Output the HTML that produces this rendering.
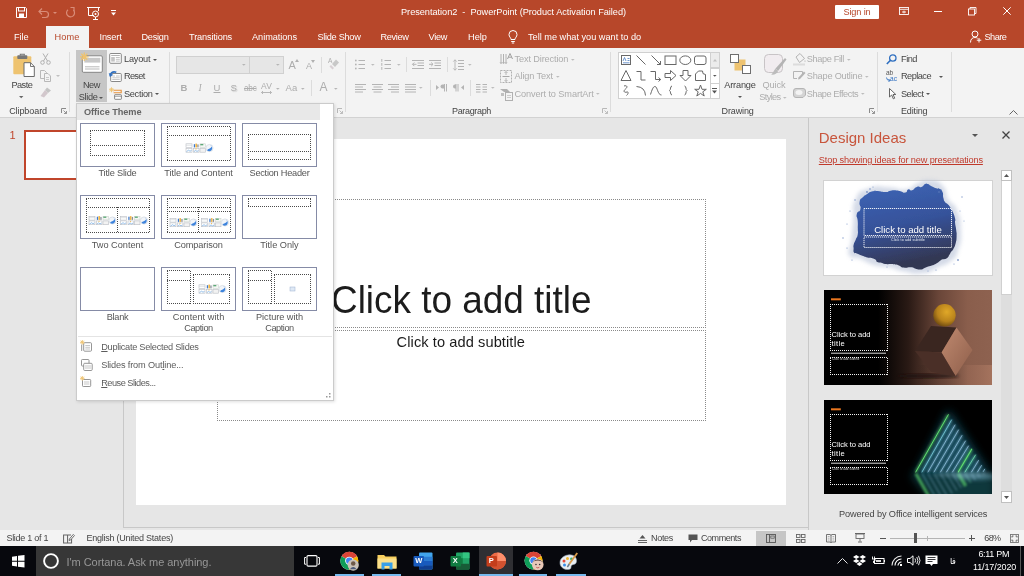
<!DOCTYPE html>
<html><head><meta charset="utf-8"><title>Presentation2 - PowerPoint</title>
<style>
*{box-sizing:border-box;margin:0;padding:0}
html,body{width:1024px;height:576px;overflow:hidden;background:#e6e6e6}
body{font-family:"Liberation Sans","Noto Sans CJK SC",sans-serif;font-size:9px;color:#444;position:relative}
.a{position:absolute}
.t{position:absolute;white-space:pre}
svg{position:absolute;overflow:visible}
.sep{position:absolute;width:1px;background:#dadada}
</style></head><body>
<div id="root" style="position:absolute;left:0;top:0;width:1024px;height:576px;will-change:transform;transform:translateZ(0)">
<div class="a" style="left:0px;top:0px;width:1024px;height:48px;background:#b7472a"></div>
<svg style="left:16px;top:7px;" width="11" height="11" viewBox="0 0 11 11"><path d="M0.5 0.5H9.5L10.5 1.5V10.5H0.5Z" fill="none" stroke="#fff" stroke-width="1"/><rect x="2.5" y="0.5" width="6" height="3.5" fill="none" stroke="#fff"/><rect x="3" y="6.5" width="5" height="4" fill="#fff"/></svg>
<svg style="left:38px;top:7px;" width="12" height="11" viewBox="0 0 12 11"><path d="M1 4.5H7.5A3 3 0 0 1 7.5 10.5H4" fill="none" stroke="#d98c78" stroke-width="1.2"/><path d="M4 1.5L1 4.5L4 7.5" fill="none" stroke="#d98c78" stroke-width="1.2"/></svg>
<svg style="left:53px;top:12.0px;" width="4" height="2" viewBox="0 0 4 2"><path d="M0 0H4 L2 2 Z" fill="#d98c78"/></svg>
<svg style="left:65px;top:7px;" width="11" height="12" viewBox="0 0 11 12"><path d="M8.5 3.2A4 4 0 1 1 3 2.8" fill="none" stroke="#d98c78" stroke-width="1.2"/><path d="M5.5 0.5H9V4" fill="none" stroke="#d98c78" stroke-width="1.2"/></svg>
<svg style="left:86.5px;top:6px;" width="13" height="14" viewBox="0 0 13 14"><path d="M0 1.5H13M1.5 1.5V9.5H7M11.5 1.5V5" fill="none" stroke="#fff" stroke-width="1"/><circle cx="8.5" cy="8" r="3" fill="none" stroke="#fff"/><circle cx="8.5" cy="8" r="1" fill="#fff"/><path d="M6 13.5H11M8.5 11V13.5" stroke="#fff" fill="none"/></svg>
<svg style="left:111px;top:10px;" width="5" height="6" viewBox="0 0 5 6"><path d="M0 0.5H5" stroke="#fff"/><path d="M0 2.5H5L2.5 5.5Z" fill="#fff"/></svg>
<span class="t" style="left:401px;top:5.7px;font-size:9.2px;line-height:12px;height:12px;color:#fff;font-weight:normal;font-style:normal;letter-spacing:-0.03px;">Presentation2  -  PowerPoint (Product Activation Failed)</span>
<div class="a" style="left:835px;top:4.5px;width:44px;height:14.5px;background:#fff;border-radius:1px"></div>
<span class="t" style="left:843.5px;top:5.7px;font-size:9.2px;line-height:12px;height:12px;color:#b7472a;font-weight:normal;font-style:normal;letter-spacing:-0.16px;">Sign in</span>
<svg style="left:898.5px;top:7px;" width="10" height="8" viewBox="0 0 10 8"><rect x="0.5" y="0.5" width="9" height="7" fill="none" stroke="#fff" stroke-width="0.9"/><path d="M0.5 2.300H9.500" stroke="#fff" stroke-width="0.900"/><path d="M3 5H7M5 3.600V6.400" stroke="#fff" stroke-width="0.900"/></svg>
<div class="a" style="left:934px;top:10.6px;width:8px;height:1px;background:#fff"></div>
<svg style="left:968px;top:7px;" width="8.5" height="8.5" viewBox="0 0 8.5 8.5"><rect x="0.5" y="2" width="6" height="6" fill="none" stroke="#fff" stroke-width="0.9"/><path d="M2 2V0.500H8V6.500H6.500" fill="none" stroke="#fff" stroke-width="0.900"/></svg>
<svg style="left:1003px;top:7px;" width="8" height="8" viewBox="0 0 8 8"><path d="M0.300 0.300L7.700 7.700M7.700 0.300L0.300 7.700" stroke="#fff" stroke-width="1"/></svg>
<div class="a" style="left:46px;top:26px;width:43px;height:22px;background:#f3f3f3"></div>
<span class="t" style="left:14px;top:30.7px;font-size:9.2px;line-height:12px;height:12px;color:#fff;font-weight:normal;font-style:normal;letter-spacing:-0.08px;">File</span>
<span class="t" style="left:54.5px;top:30.7px;font-size:9.2px;line-height:12px;height:12px;color:#b7472a;font-weight:normal;font-style:normal;letter-spacing:0.12px;">Home</span>
<span class="t" style="left:99.5px;top:30.7px;font-size:9.2px;line-height:12px;height:12px;color:#fff;font-weight:normal;font-style:normal;letter-spacing:-0.16px;">Insert</span>
<span class="t" style="left:141.5px;top:30.7px;font-size:9.2px;line-height:12px;height:12px;color:#fff;font-weight:normal;font-style:normal;letter-spacing:-0.27px;">Design</span>
<span class="t" style="left:189px;top:30.7px;font-size:9.2px;line-height:12px;height:12px;color:#fff;font-weight:normal;font-style:normal;letter-spacing:-0.14px;">Transitions</span>
<span class="t" style="left:252px;top:30.7px;font-size:9.2px;line-height:12px;height:12px;color:#fff;font-weight:normal;font-style:normal;letter-spacing:-0.05px;">Animations</span>
<span class="t" style="left:317.5px;top:30.7px;font-size:9.2px;line-height:12px;height:12px;color:#fff;font-weight:normal;font-style:normal;letter-spacing:-0.30px;">Slide Show</span>
<span class="t" style="left:380.5px;top:30.7px;font-size:9.2px;line-height:12px;height:12px;color:#fff;font-weight:normal;font-style:normal;letter-spacing:-0.35px;">Review</span>
<span class="t" style="left:428.5px;top:30.7px;font-size:9.2px;line-height:12px;height:12px;color:#fff;font-weight:normal;font-style:normal;letter-spacing:-0.31px;">View</span>
<span class="t" style="left:468px;top:30.7px;font-size:9.2px;line-height:12px;height:12px;color:#fff;font-weight:normal;font-style:normal;letter-spacing:0.02px;">Help</span>
<svg style="left:508px;top:30px;" width="10" height="14" viewBox="0 0 10 14"><path d="M3 9.5C3 7.5 1 7 1 4.5A4 4 0 0 1 9 4.5C9 7 7 7.5 7 9.5Z" fill="none" stroke="#fff" stroke-width="1"/><path d="M3.2 11.5H6.8M3.8 13H6.2" stroke="#fff" stroke-width="1"/></svg>
<span class="t" style="left:528px;top:30.7px;font-size:9.2px;line-height:12px;height:12px;color:#fff;font-weight:normal;font-style:normal;letter-spacing:-0.01px;">Tell me what you want to do</span>
<svg style="left:970px;top:30px;" width="12" height="13" viewBox="0 0 12 13"><circle cx="5" cy="4" r="3" fill="none" stroke="#fff"/><path d="M0.5 12.5C0.5 9 2.5 7.5 5 7.5C6 7.5 7 7.8 7.6 8.3" fill="none" stroke="#fff"/><path d="M9 8V12.5M6.8 10.2H11.3" stroke="#fff"/></svg>
<span class="t" style="left:984.5px;top:30.7px;font-size:9.2px;line-height:12px;height:12px;color:#fff;font-weight:normal;font-style:normal;letter-spacing:-0.51px;">Share</span>
<div class="a" style="left:0px;top:48px;width:1024px;height:70px;background:#f3f3f3;border-bottom:1px solid #d2d2d2"></div>
<div class="a" style="left:69.3px;top:52px;width:1px;height:60px;background:#dcdcdc"></div>
<div class="a" style="left:169px;top:52px;width:1px;height:60px;background:#dcdcdc"></div>
<div class="a" style="left:345px;top:52px;width:1px;height:60px;background:#dcdcdc"></div>
<div class="a" style="left:610.2px;top:52px;width:1px;height:60px;background:#dcdcdc"></div>
<div class="a" style="left:877px;top:52px;width:1px;height:60px;background:#dcdcdc"></div>
<div class="a" style="left:951px;top:52px;width:1px;height:60px;background:#dcdcdc"></div>
<svg style="left:12.5px;top:54px;" width="22" height="22" viewBox="0 0 22 22"><rect x="0.3" y="2.300" width="18" height="18" rx="1" fill="#eec370"/><rect x="4.300" y="1.300" width="10" height="3.700" rx="0.800" fill="#767676"/><path d="M7.300 1.500V0.300H11.300V1.500" fill="none" stroke="#767676" stroke-width="1.100"/><path d="M11 8.700H17.500L21.300 12.500V22.500H11Z" fill="#fff" stroke="#6b6b6b" stroke-width="1"/><path d="M17.500 8.700V12.500H21.300" fill="none" stroke="#6b6b6b" stroke-width="0.900"/></svg>
<span class="t" style="left:11.5px;top:79.4px;font-size:9.2px;line-height:12px;height:12px;color:#444;font-weight:normal;font-style:normal;letter-spacing:-0.56px;">Paste</span>
<svg style="left:18.8px;top:95.5px;" width="4.4" height="2.2" viewBox="0 0 4.4 2.2"><path d="M0 0H4.4 L2.2 2.2 Z" fill="#666"/></svg>
<svg style="left:40px;top:53px;" width="11" height="12" viewBox="0 0 11 12"><path d="M3 0.5L7.5 8M8 0.5L3.5 8" stroke="#b0b0b0" fill="none" stroke-width="1"/><circle cx="2.5" cy="9.5" r="1.8" fill="none" stroke="#b0b0b0"/><circle cx="8.5" cy="9.5" r="1.8" fill="none" stroke="#b0b0b0"/></svg>
<svg style="left:40px;top:70px;" width="11" height="12" viewBox="0 0 11 12"><path d="M0.5 0.5H4.5L6.5 2.5V8.5H0.5Z" fill="none" stroke="#b8b8b8"/><path d="M4.5 3.5H8L10.5 6V11.5H4.5Z" fill="#f3f3f3" stroke="#b8b8b8"/><path d="M6 7.5H9M6 9.5H9" stroke="#c8c8c8"/></svg>
<svg style="left:56px;top:75.0px;" width="4" height="2" viewBox="0 0 4 2"><path d="M0 0H4 L2 2 Z" fill="#c0c0c0"/></svg>
<svg style="left:40px;top:87px;" width="12" height="11" viewBox="0 0 12 11"><path d="M7 0.5L11 3.5L8 6L5 3Z" fill="#c4c4c4"/><path d="M5 3L8 6L4 10.5L0.5 9Z" fill="#d2c7cc"/></svg>
<span class="t" style="left:9.2px;top:104.7px;font-size:9px;line-height:12px;height:12px;color:#444;font-weight:normal;font-style:normal;letter-spacing:-0.08px;">Clipboard</span>
<svg style="left:61px;top:107.8px;" width="6" height="6" viewBox="0 0 6 6"><path d="M0.5 5V0.5H5" fill="none" stroke="#8a8a8a"/><path d="M2.5 2.5L5.5 5.5M5.5 3V5.5H3" fill="none" stroke="#8a8a8a" stroke-width="0.9"/></svg>
<div class="a" style="left:76px;top:50px;width:31px;height:52px;background:#c6c6c6"></div>
<svg style="left:78.5px;top:52px;" width="24" height="21" viewBox="0 0 24 21"><rect x="3.300" y="3.800" width="20" height="16.500" rx="1.200" fill="#fff" stroke="#7c7c7c" stroke-width="0.9"/><rect x="5.300" y="5.800" width="16" height="4.800" fill="#c8c8c8"/><path d="M6 14.800H20.500M6 17H20.500" stroke="#9a9a9a" stroke-width="0.700"/><path d="M5.300 0.500V9M1 4.800H9.600M2.300 1.800L8.300 7.800M8.300 1.800L2.300 7.800" stroke="#eec370" stroke-width="1.300"/></svg>
<span class="t" style="left:83px;top:79.4px;font-size:9.2px;line-height:12px;height:12px;color:#444;font-weight:normal;font-style:normal;letter-spacing:-0.53px;">New</span>
<span class="t" style="left:78.8px;top:90.9px;font-size:9.2px;line-height:12px;height:12px;color:#444;font-weight:normal;font-style:normal;letter-spacing:-0.35px;">Slide</span>
<svg style="left:99px;top:96.5px;" width="4" height="2" viewBox="0 0 4 2"><path d="M0 0H4 L2 2 Z" fill="#555"/></svg>
<svg style="left:109px;top:53.3px;" width="13" height="11" viewBox="0 0 13 11"><rect x="0.700" y="0.500" width="11.600" height="9.800" rx="1" fill="#fff" stroke="#7c7c7c" stroke-width="0.9"/><path d="M2.200 2.500H10.800" stroke="#a0a0a0" stroke-width="0.800"/><rect x="2.200" y="4" width="3.600" height="4.600" fill="#c4c4c4"/><path d="M6.800 4.500H10.800M6.800 6.300H10.800M6.800 8.100H10.800" stroke="#a8a8a8" stroke-width="0.700"/></svg>
<span class="t" style="left:124px;top:52.6px;font-size:9.2px;line-height:12px;height:12px;color:#444;font-weight:normal;font-style:normal;letter-spacing:-0.22px;">Layout</span>
<svg style="left:153px;top:58.5px;" width="4" height="2" viewBox="0 0 4 2"><path d="M0 0H4 L2 2 Z" fill="#555"/></svg>
<svg style="left:109px;top:69.5px;" width="13" height="13" viewBox="0 0 13 13"><rect x="1.700" y="3.500" width="10.600" height="8" rx="0.800" fill="#fff" stroke="#7c7c7c" stroke-width="0.9"/><path d="M3.300 6H6M7 6H10.800M3.300 7.800H10.800M3.300 9.500H10.800" stroke="#b0b0b0" stroke-width="0.700"/><path d="M1.200 6.300C0.800 3.300 3.500 0.800 7.300 2.300" fill="none" stroke="#2f6fc0" stroke-width="1.600"/><path d="M-0.300 3L1.200 6.800L4.300 4.800Z" fill="#2f6fc0"/></svg>
<span class="t" style="left:124px;top:70.4px;font-size:9.2px;line-height:12px;height:12px;color:#444;font-weight:normal;font-style:normal;letter-spacing:-0.70px;">Reset</span>
<svg style="left:109px;top:86.5px;" width="14" height="13" viewBox="0 0 14 13"><path d="M4.600 3.200H12.200V5.800H4.600" fill="none" stroke="#e8923c" stroke-width="1.100"/><rect x="5.600" y="7.700" width="6.800" height="4.600" rx="0.500" fill="#fff" stroke="#7c7c7c" stroke-width="0.900"/><path d="M5.600 9.300H12.400" stroke="#7c7c7c" stroke-width="0.700"/><path d="M2.500 0.300V5.300M0 2.800H5M0.800 1.100L4.200 4.500M4.200 1.100L0.800 4.500" stroke="#eec370" stroke-width="0.900"/></svg>
<span class="t" style="left:124px;top:88.0px;font-size:9.2px;line-height:12px;height:12px;color:#444;font-weight:normal;font-style:normal;letter-spacing:-0.31px;">Section</span>
<svg style="left:155px;top:93.0px;" width="4" height="2" viewBox="0 0 4 2"><path d="M0 0H4 L2 2 Z" fill="#555"/></svg>
<div class="a" style="left:176px;top:56px;width:73.5px;height:17.5px;background:#e6e6e6;border:1px solid #d0d0d0"></div>
<div class="a" style="left:249px;top:56px;width:34.5px;height:17.5px;background:#e6e6e6;border:1px solid #d0d0d0"></div>
<svg style="left:242.2px;top:64.1px;" width="3.6" height="1.8" viewBox="0 0 3.6 1.8"><path d="M0 0H3.6 L1.8 1.8 Z" fill="#b5b5b5"/></svg>
<svg style="left:276.2px;top:64.1px;" width="3.6" height="1.8" viewBox="0 0 3.6 1.8"><path d="M0 0H3.6 L1.8 1.8 Z" fill="#b5b5b5"/></svg>
<span class="t" style="left:288.5px;top:58.4px;font-size:11px;line-height:14px;height:14px;color:#adadad;font-weight:normal;font-style:normal;letter-spacing:0.66px;">A</span>
<svg style="left:295px;top:58.5px;" width="4" height="3" viewBox="0 0 4 3"><path d="M0 3L2 0L4 3Z" fill="#b0b0b0"/></svg>
<span class="t" style="left:306px;top:60.4px;font-size:9px;line-height:12px;height:12px;color:#adadad;font-weight:normal;font-style:normal;letter-spacing:-0.02px;">A</span>
<svg style="left:311px;top:59.5px;" width="4" height="3" viewBox="0 0 4 3"><path d="M0 0H4L2 3Z" fill="#b0b0b0"/></svg>
<div class="a" style="left:320.5px;top:57px;width:1px;height:16px;background:#dcdcdc"></div>
<svg style="left:327px;top:58px;" width="12" height="12" viewBox="0 0 12 12"><path d="M5 6L9 1.5L12 4.5L8 9Z" fill="#c8c8c8"/><path d="M4 7L7 10L5.5 11.5L2.5 8.5Z" fill="#d8d0d4"/></svg>
<span class="t" style="left:328px;top:57.1px;font-size:6.5px;line-height:8px;height:8px;color:#adadad;font-weight:normal;font-style:normal;letter-spacing:0.66px;">A</span>
<span class="t" style="left:180.5px;top:82.0px;font-size:9.5px;line-height:12px;height:12px;color:#adadad;font-weight:bold;font-style:normal;letter-spacing:-0.38px;">B</span>
<span class="t" style="left:198.5px;top:82.0px;font-size:9.5px;line-height:12px;height:12px;color:#adadad;font-weight:normal;font-style:italic;letter-spacing:0.36px;font-family:'Liberation Serif',serif;">I</span>
<span class="t" style="left:213.5px;top:82.0px;font-size:9.5px;line-height:12px;height:12px;color:#adadad;font-weight:normal;font-style:normal;letter-spacing:0.12px;text-decoration:underline;">U</span>
<span class="t" style="left:230.5px;top:82.0px;font-size:9.5px;line-height:12px;height:12px;color:#adadad;font-weight:normal;font-style:normal;letter-spacing:-0.34px;text-shadow:1px 1px 1px #ccc;">S</span>
<span class="t" style="left:244px;top:82.6px;font-size:8.2px;line-height:11px;height:11px;color:#adadad;font-weight:normal;font-style:normal;letter-spacing:-0.23px;text-decoration:line-through;">abc</span>
<span class="t" style="left:261px;top:80.6px;font-size:8.5px;line-height:11px;height:11px;color:#adadad;font-weight:normal;font-style:normal;letter-spacing:0.14px;">AV</span>
<svg style="left:261px;top:91.3px;" width="11" height="3" viewBox="0 0 11 3"><path d="M0.5 1.5H10.5M2 0L0.5 1.5L2 3M9 0L10.5 1.5L9 3" fill="none" stroke="#b0b0b0" stroke-width="0.9"/></svg>
<svg style="left:275.7px;top:87.69999999999999px;" width="3.6" height="1.8" viewBox="0 0 3.6 1.8"><path d="M0 0H3.6 L1.8 1.8 Z" fill="#b5b5b5"/></svg>
<span class="t" style="left:285.5px;top:82.0px;font-size:9.5px;line-height:12px;height:12px;color:#adadad;font-weight:normal;font-style:normal;letter-spacing:0.19px;">Aa</span>
<svg style="left:300.7px;top:87.69999999999999px;" width="3.6" height="1.8" viewBox="0 0 3.6 1.8"><path d="M0 0H3.6 L1.8 1.8 Z" fill="#b5b5b5"/></svg>
<div class="a" style="left:311px;top:80px;width:1px;height:16px;background:#dcdcdc"></div>
<span class="t" style="left:319.5px;top:79.4px;font-size:12px;line-height:16px;height:16px;color:#adadad;font-weight:normal;font-style:normal;letter-spacing:-0.02px;">A</span>
<svg style="left:333.7px;top:87.69999999999999px;" width="3.6" height="1.8" viewBox="0 0 3.6 1.8"><path d="M0 0H3.6 L1.8 1.8 Z" fill="#b5b5b5"/></svg>
<svg style="left:337px;top:107.8px;" width="6" height="6" viewBox="0 0 6 6"><path d="M0.5 5V0.5H5" fill="none" stroke="#b8b8b8"/><path d="M2.5 2.5L5.5 5.5M5.5 3V5.5H3" fill="none" stroke="#b8b8b8" stroke-width="0.9"/></svg>
<svg style="left:355px;top:59px;" width="10" height="11" viewBox="0 0 10 11"><path d="M3.5 1.5H10M3.5 5.500H10M3.5 9.500H10" stroke="#b4b4b4"/><rect x="0" y="0.7" width="1.6" height="1.6" fill="#b4b4b4"/><rect x="0" y="4.700" width="1.6" height="1.6" fill="#b4b4b4"/><rect x="0" y="8.700" width="1.6" height="1.6" fill="#b4b4b4"/></svg>
<svg style="left:371.2px;top:63.9px;" width="3.6" height="1.8" viewBox="0 0 3.6 1.8"><path d="M0 0H3.6 L1.8 1.8 Z" fill="#bcbcbc"/></svg>
<svg style="left:381px;top:59px;" width="10" height="11" viewBox="0 0 10 11"><path d="M3.5 1.5H10M3.5 5.500H10M3.5 9.500H10" stroke="#b4b4b4"/><path d="M0.8 0V2.800M0.8 4V6.800M0.8 8V10.800" stroke="#b4b4b4" stroke-width="1"/></svg>
<svg style="left:396.7px;top:63.9px;" width="3.6" height="1.8" viewBox="0 0 3.6 1.8"><path d="M0 0H3.6 L1.8 1.8 Z" fill="#bcbcbc"/></svg>
<div class="a" style="left:406px;top:57px;width:1px;height:15px;background:#dcdcdc"></div>
<svg style="left:412px;top:60px;" width="12" height="9" viewBox="0 0 12 9"><path d="M0 0.5H12M5.5 3H12M5.5 5.5H12M0 8.5H12" stroke="#b4b4b4"/><path d="M4.5 4.3H0.5M2.3 2.5L0.5 4.3L2.3 6.1" stroke="#b4b4b4" fill="none"/></svg>
<svg style="left:429px;top:60px;" width="12" height="9" viewBox="0 0 12 9"><path d="M0 0.5H12M5.5 3H12M5.5 5.5H12M0 8.5H12" stroke="#b4b4b4"/><path d="M0 4.3H4M2.2 2.5L4 4.3L2.2 6.1" stroke="#b4b4b4" fill="none"/></svg>
<div class="a" style="left:446.5px;top:57px;width:1px;height:15px;background:#dcdcdc"></div>
<svg style="left:452.5px;top:58.5px;" width="11" height="12" viewBox="0 0 11 12"><path d="M5 1.5H11M5 4.5H11M5 7.5H11M5 10.5H11" stroke="#b4b4b4"/><path d="M2 0.8V11.2M0.3 2.6L2 0.8L3.7 2.6M0.3 9.4L2 11.2L3.7 9.4" stroke="#b4b4b4" fill="none" stroke-width="0.9"/></svg>
<svg style="left:467.7px;top:63.9px;" width="3.6" height="1.8" viewBox="0 0 3.6 1.8"><path d="M0 0H3.6 L1.8 1.8 Z" fill="#bcbcbc"/></svg>
<svg style="left:355px;top:83.5px;" width="11" height="9" viewBox="0 0 11 9"><path d="M0 0.5H11M0 3H8M0 5.5H11M0 8H8" stroke="#b4b4b4"/></svg>
<svg style="left:372px;top:83.5px;" width="11" height="9" viewBox="0 0 11 9"><path d="M0 0.5H11M1.5 3H9.5M0 5.5H11M1.5 8H9.5" stroke="#b4b4b4"/></svg>
<svg style="left:388px;top:83.5px;" width="11" height="9" viewBox="0 0 11 9"><path d="M0 0.5H11M3 3H11M0 5.5H11M3 8H11" stroke="#b4b4b4"/></svg>
<svg style="left:404.5px;top:83.5px;" width="11" height="9" viewBox="0 0 11 9"><path d="M0 0.5H11M0 3H11M0 5.5H11M0 8H11" stroke="#b4b4b4"/></svg>
<svg style="left:419.2px;top:87.1px;" width="3.6" height="1.8" viewBox="0 0 3.6 1.8"><path d="M0 0H3.6 L1.8 1.8 Z" fill="#bcbcbc"/></svg>
<div class="a" style="left:429.5px;top:80px;width:1px;height:16px;background:#dcdcdc"></div>
<svg style="left:436px;top:84px;" width="11" height="8" viewBox="0 0 11 8"><path d="M0 1L3 3.5L0 6Z" fill="#b4b4b4"/><path d="M8.5 0V7.5M10.5 0V7.5" stroke="#b4b4b4"/><path d="M8.5 0.5H6.5A2 2 0 0 0 6.5 4.5H8.5Z" fill="#b4b4b4"/></svg>
<svg style="left:452.5px;top:84px;" width="11" height="8" viewBox="0 0 11 8"><path d="M11 1L8 3.5L11 6Z" fill="#b4b4b4"/><path d="M3 0V7.5M5 0V7.5" stroke="#b4b4b4"/><path d="M3 0.5H2A2 2 0 0 0 2 4.5H3Z" fill="#b4b4b4"/></svg>
<div class="a" style="left:470px;top:80px;width:1px;height:16px;background:#dcdcdc"></div>
<svg style="left:476px;top:83.5px;" width="11" height="9" viewBox="0 0 11 9"><path d="M0 0.5H4.5M6.5 0.5H11M0 3H4.5M6.5 3H11M0 5.5H4.5M6.5 5.5H11M0 8H4.5M6.5 8H11" stroke="#b4b4b4"/></svg>
<svg style="left:490.7px;top:87.1px;" width="3.6" height="1.8" viewBox="0 0 3.6 1.8"><path d="M0 0H3.6 L1.8 1.8 Z" fill="#bcbcbc"/></svg>
<svg style="left:499.5px;top:53px;" width="13" height="12" viewBox="0 0 13 12"><path d="M1 1V10M3.5 1V10M6 1V10" stroke="#b0b0b0"/><path d="M0 9L1 11L2 9M2.5 9L3.5 11L4.5 9M5 9L6 11L7 9" stroke="#b0b0b0" fill="none" stroke-width="0.7"/><path d="M7.5 6L10 0.5L12.5 6M8.3 4.2H11.7" stroke="#a0a0a0" fill="none"/></svg>
<span class="t" style="left:514.5px;top:52.6px;font-size:9.2px;line-height:12px;height:12px;color:#adadad;font-weight:normal;font-style:normal;letter-spacing:-0.13px;">Text Direction</span>
<svg style="left:570.7px;top:58.6px;" width="3.6" height="1.8" viewBox="0 0 3.6 1.8"><path d="M0 0H3.6 L1.8 1.8 Z" fill="#bcbcbc"/></svg>
<svg style="left:500px;top:70px;" width="12" height="13" viewBox="0 0 12 13"><rect x="0.5" y="0.5" width="11" height="12" fill="none" stroke="#b0b0b0" stroke-dasharray="2 1"/><path d="M2.5 6.5H9.5" stroke="#a8a8a8"/><path d="M6 1.5V5M6 8V11.5M4.5 3L6 1.5L7.5 3M4.5 10L6 11.5L7.5 10" stroke="#a8a8a8" fill="none" stroke-width="0.8"/></svg>
<span class="t" style="left:514.5px;top:70.4px;font-size:9.2px;line-height:12px;height:12px;color:#adadad;font-weight:normal;font-style:normal;letter-spacing:-0.12px;">Align Text</span>
<svg style="left:555.7px;top:75.69999999999999px;" width="3.6" height="1.8" viewBox="0 0 3.6 1.8"><path d="M0 0H3.6 L1.8 1.8 Z" fill="#bcbcbc"/></svg>
<svg style="left:500px;top:87.5px;" width="13" height="13" viewBox="0 0 13 13"><path d="M0 1H7L10 4H4Z" fill="#b0b0b0"/><rect x="5.5" y="4.5" width="7" height="8" fill="#f3f3f3" stroke="#b0b0b0"/><path d="M7 7.5H11M7 9.5H11" stroke="#c0c0c0" stroke-width="0.8"/><rect x="1" y="5" width="3" height="3" fill="#c0c0c0"/></svg>
<span class="t" style="left:514.5px;top:88.2px;font-size:9.2px;line-height:12px;height:12px;color:#adadad;font-weight:normal;font-style:normal;letter-spacing:-0.10px;">Convert to SmartArt</span>
<svg style="left:596.2px;top:93.3px;" width="3.6" height="1.8" viewBox="0 0 3.6 1.8"><path d="M0 0H3.6 L1.8 1.8 Z" fill="#bcbcbc"/></svg>
<span class="t" style="left:452px;top:104.7px;font-size:9px;line-height:12px;height:12px;color:#444;font-weight:normal;font-style:normal;letter-spacing:-0.34px;">Paragraph</span>
<svg style="left:602px;top:107.8px;" width="6" height="6" viewBox="0 0 6 6"><path d="M0.5 5V0.5H5" fill="none" stroke="#b8b8b8"/><path d="M2.5 2.5L5.5 5.5M5.5 3V5.5H3" fill="none" stroke="#b8b8b8" stroke-width="0.9"/></svg>
<div class="a" style="left:618px;top:52px;width:102px;height:46.5px;background:#fff;border:1px solid #d0d0d0"></div>
<div class="a" style="left:709.5px;top:52px;width:10.5px;height:16px;background:#ececec;border:1px solid #d0d0d0"></div>
<div class="a" style="left:709.5px;top:67.5px;width:10.5px;height:16px;background:#fff;border:1px solid #d0d0d0"></div>
<div class="a" style="left:709.5px;top:83px;width:10.5px;height:15.5px;background:#fff;border:1px solid #d0d0d0"></div>
<svg style="left:712.5px;top:58.5px;" width="4" height="2.5" viewBox="0 0 4 2.5"><path d="M0 2.5L2 0L4 2.5Z" fill="#c0c0c0"/></svg>
<svg style="left:712.9000000000001px;top:74.6px;" width="3.6" height="1.8" viewBox="0 0 3.6 1.8"><path d="M0 0H3.6 L1.8 1.8 Z" fill="#555"/></svg>
<svg style="left:712.2px;top:88px;" width="5" height="6" viewBox="0 0 5 6"><path d="M0 0.5H5" stroke="#555"/><path d="M0 2.5H5L2.5 5.5Z" fill="#555"/></svg>
<svg style="left:0;top:0" width="1024" height="120" viewBox="0 0 1024 120"><rect x="621.5" y="55.5" width="9" height="9" fill="#fff" stroke="#686868"/><path d="M623 61L624.5 57.5L626 61M627.5 58.5H629.5M627.5 60.5H629.5M623 62.8H629.5" stroke="#4a7cc0" stroke-width="0.8" fill="none"/><path d="M636.5 55.5L645.5 64.5" stroke="#686868"/><path d="M651.5 55.5L660.5 64.5M660.5 61V64.5H657" stroke="#686868" fill="none"/><rect x="665" y="56" width="11" height="8.5" fill="none" stroke="#686868"/><ellipse cx="685.3" cy="60.2" rx="5.5" ry="4.3" fill="none" stroke="#686868"/><rect x="694.5" y="56" width="11.5" height="8.5" rx="2" fill="none" stroke="#686868"/><path d="M626 70.5L631 80.5H621Z" fill="none" stroke="#686868"/><path d="M636.5 71.5H641V80H645.5" fill="none" stroke="#686868"/><path d="M650.5 71.5H655.5V79.5H660.5M658.5 77.5L660.7 79.5L658.5 81.5" fill="none" stroke="#686868"/><path d="M665 73.5H670.5V70.5L676 75.5L670.5 80.5V77.5H665Z" fill="none" stroke="#686868"/><path d="M683 70.5H688V75.5H691L685.5 81L680 75.5H683Z" fill="none" stroke="#686868"/><path d="M695.5 80.5V74L698.500 71H702.500Q702 74.500 705.500 74.500V80.500Z" fill="none" stroke="#686868"/><path d="M624 86C627 85 628 87 625.5 89C623 91 624 93 627 92C629 91.5 628 94.5 626.5 95.5" fill="none" stroke="#686868"/><path d="M636.5 86.5Q645 87 645.5 95.5" fill="none" stroke="#686868"/><path d="M650.500 94.500C652 90 653 86.500 655 86.500C657.500 86.500 657.500 95 661.500 95" fill="none" stroke="#686868"/><path d="M672 86C670 86 671 90 669.5 90.5C671 91 670 95 672 95" fill="none" stroke="#686868"/><path d="M684.5 86C686.5 86 685.5 90 687 90.5C685.5 91 686.5 95 684.5 95" fill="none" stroke="#686868"/><path d="M700.5 85L702 89.3H706.3L702.8 91.8L704.2 96L700.5 93.4L696.8 96L698.2 91.8L694.7 89.3H699Z" fill="none" stroke="#686868"/></svg>
<svg style="left:729.5px;top:54px;" width="21" height="20" viewBox="0 0 21 20"><rect x="4.5" y="5.5" width="11" height="11" fill="#eec370"/><rect x="0.5" y="0.5" width="8" height="8" fill="#fff" stroke="#6e6e6e"/><rect x="12.5" y="11.5" width="8" height="8" fill="#fff" stroke="#6e6e6e"/></svg>
<span class="t" style="left:724.2px;top:79.4px;font-size:9.2px;line-height:12px;height:12px;color:#444;font-weight:normal;font-style:normal;letter-spacing:-0.16px;">Arrange</span>
<svg style="left:738px;top:95.8px;" width="4" height="2" viewBox="0 0 4 2"><path d="M0 0H4 L2 2 Z" fill="#555"/></svg>
<svg style="left:764px;top:54px;" width="22" height="22" viewBox="0 0 22 22"><rect x="0.5" y="0.5" width="18" height="18" rx="4" fill="#f1ecef" stroke="#c8c4c6"/><path d="M21 4L22.500 5.500L14 17L11.500 14.500Z" fill="#b4b4b4"/><path d="M11.500 14.500L14 17C13 20.500 9.500 21 7 20.500C9 19.500 9.500 17 11.500 14.500Z" fill="#bcbcbc"/></svg>
<span class="t" style="left:762.5px;top:79.4px;font-size:9.2px;line-height:12px;height:12px;color:#adadad;font-weight:normal;font-style:normal;letter-spacing:-0.10px;">Quick</span>
<span class="t" style="left:759.3px;top:90.9px;font-size:9.2px;line-height:12px;height:12px;color:#adadad;font-weight:normal;font-style:normal;letter-spacing:-0.64px;">Styles</span>
<svg style="left:783.2px;top:96.6px;" width="3.6" height="1.8" viewBox="0 0 3.6 1.8"><path d="M0 0H3.6 L1.8 1.8 Z" fill="#bcbcbc"/></svg>
<svg style="left:793px;top:53px;" width="13" height="12" viewBox="0 0 13 12"><path d="M3 4L7 0.5L11.5 5.5L6.5 9.5Z" fill="none" stroke="#b4b4b4"/><path d="M12 7C12 7 13 8.5 12 9.3C11 8.5 12 7 12 7Z" fill="#b4b4b4"/><rect x="0" y="10.5" width="12" height="2" fill="#dcdcdc"/></svg>
<span class="t" style="left:806.8px;top:52.6px;font-size:9.2px;line-height:12px;height:12px;color:#adadad;font-weight:normal;font-style:normal;letter-spacing:-0.37px;">Shape Fill</span>
<svg style="left:846.7px;top:58.6px;" width="3.6" height="1.8" viewBox="0 0 3.6 1.8"><path d="M0 0H3.6 L1.8 1.8 Z" fill="#bcbcbc"/></svg>
<svg style="left:793px;top:70px;" width="13" height="12" viewBox="0 0 13 12"><path d="M0.5 1.5H9.5V4M0.5 1.5V8.5H4" fill="none" stroke="#b4b4b4"/><path d="M11 1.5L12.5 3L7 9L5 9.5L5.5 7.5Z" fill="#b4b4b4"/></svg>
<span class="t" style="left:806.8px;top:70.4px;font-size:9.2px;line-height:12px;height:12px;color:#adadad;font-weight:normal;font-style:normal;letter-spacing:-0.21px;">Shape Outline</span>
<svg style="left:864.7px;top:75.69999999999999px;" width="3.6" height="1.8" viewBox="0 0 3.6 1.8"><path d="M0 0H3.6 L1.8 1.8 Z" fill="#bcbcbc"/></svg>
<svg style="left:793px;top:88px;" width="13" height="11" viewBox="0 0 13 11"><path d="M3 0.5H10Q12.5 0.5 12.5 3V7L10 9.5H3Q0.5 9.5 0.5 7V3Q0.5 0.5 3 0.5Z" fill="#d4d4d4" stroke="#b4b4b4"/><ellipse cx="6" cy="4.5" rx="3.5" ry="2.5" fill="#f3f3f3"/></svg>
<span class="t" style="left:806.8px;top:88.2px;font-size:9.2px;line-height:12px;height:12px;color:#adadad;font-weight:normal;font-style:normal;letter-spacing:-0.43px;">Shape Effects</span>
<svg style="left:860.7px;top:93.3px;" width="3.6" height="1.8" viewBox="0 0 3.6 1.8"><path d="M0 0H3.6 L1.8 1.8 Z" fill="#bcbcbc"/></svg>
<span class="t" style="left:721.5px;top:104.7px;font-size:9px;line-height:12px;height:12px;color:#444;font-weight:normal;font-style:normal;letter-spacing:-0.12px;">Drawing</span>
<svg style="left:869px;top:107.8px;" width="6" height="6" viewBox="0 0 6 6"><path d="M0.5 5V0.5H5" fill="none" stroke="#8a8a8a"/><path d="M2.5 2.5L5.5 5.5M5.5 3V5.5H3" fill="none" stroke="#8a8a8a" stroke-width="0.9"/></svg>
<svg style="left:886px;top:54px;" width="11" height="11" viewBox="0 0 11 11"><circle cx="6.8" cy="4" r="3.2" fill="none" stroke="#2f6fc0" stroke-width="1.3"/><path d="M4.5 6.3L0.8 10" stroke="#2f6fc0" stroke-width="1.6"/></svg>
<span class="t" style="left:901px;top:52.6px;font-size:9.2px;line-height:12px;height:12px;color:#444;font-weight:normal;font-style:normal;letter-spacing:-0.47px;">Find</span>
<span class="t" style="left:886px;top:69.1px;font-size:6.5px;line-height:8px;height:8px;color:#555;font-weight:normal;font-style:normal;letter-spacing:-0.12px;">ab</span>
<span class="t" style="left:890px;top:75.1px;font-size:6.5px;line-height:8px;height:8px;color:#2f6fc0;font-weight:normal;font-style:normal;letter-spacing:0.06px;">ac</span>
<svg style="left:886px;top:76.5px;" width="5" height="5" viewBox="0 0 5 5"><path d="M0.5 0.5Q0.5 3.5 4 3.5M2.5 2L4 3.5L2.5 5" stroke="#2f6fc0" fill="none" stroke-width="0.9"/></svg>
<span class="t" style="left:901px;top:70.4px;font-size:9.2px;line-height:12px;height:12px;color:#444;font-weight:normal;font-style:normal;letter-spacing:-0.53px;">Replace</span>
<svg style="left:938.5px;top:75.8px;" width="4" height="2" viewBox="0 0 4 2"><path d="M0 0H4 L2 2 Z" fill="#555"/></svg>
<svg style="left:889px;top:87.5px;" width="7" height="12" viewBox="0 0 7 12"><path d="M0.5 0.5V9L2.7 7L4.3 10.8L5.7 10.2L4.1 6.5H6.8Z" fill="#fff" stroke="#555" stroke-width="0.9"/></svg>
<span class="t" style="left:901px;top:88.0px;font-size:9.2px;line-height:12px;height:12px;color:#444;font-weight:normal;font-style:normal;letter-spacing:-0.52px;">Select</span>
<svg style="left:926px;top:93.2px;" width="4" height="2" viewBox="0 0 4 2"><path d="M0 0H4 L2 2 Z" fill="#555"/></svg>
<span class="t" style="left:901px;top:104.7px;font-size:9px;line-height:12px;height:12px;color:#444;font-weight:normal;font-style:normal;letter-spacing:-0.15px;">Editing</span>
<svg style="left:1009px;top:110px;" width="9" height="5" viewBox="0 0 9 5"><path d="M0.5 4.5L4.5 0.5L8.5 4.5" fill="none" stroke="#666"/></svg>
<div class="a" style="left:123px;top:118px;width:1px;height:410px;background:#c8c8c8"></div>
<div class="a" style="left:123px;top:527px;width:686px;height:1px;background:#c8c8c8"></div>
<span class="t" style="left:9.5px;top:127.8px;font-size:11px;line-height:14px;height:14px;color:#c0452b;font-weight:normal;font-style:normal;letter-spacing:-1.12px;">1</span>
<div class="a" style="left:24px;top:130px;width:54px;height:50px;background:#fff;border:2px solid #c0452b"></div>
<div class="a" style="left:136px;top:138.5px;width:650px;height:366.7px;background:#fff"></div>
<div class="a" style="left:217px;top:198.5px;width:488.5px;height:129px;border:1px dotted #8a8a8a"></div>
<div class="a" style="left:217px;top:330px;width:488.5px;height:90.5px;border:1px dotted #8a8a8a"></div>
<span class="t" style="left:330.5px;top:274.9px;font-size:38.2px;line-height:50px;height:50px;color:#1c1c1c;font-weight:normal;font-style:normal;transform-origin:0 50%;transform:scaleX(0.9664);">Click to add title</span>
<span class="t" style="left:396.6px;top:332.9px;font-size:14.6px;line-height:19px;height:19px;color:#1a1a1a;font-weight:normal;font-style:normal;letter-spacing:0.09px;">Click to add subtitle</span>
<div class="a" style="left:808px;top:118px;width:1px;height:412px;background:#c8c8c8"></div>
<span class="t" style="left:818.8px;top:128.1px;font-size:15px;line-height:20px;height:20px;color:#c8553c;font-weight:normal;font-style:normal;letter-spacing:-0.01px;">Design Ideas</span>
<svg style="left:972px;top:133.5px;" width="6" height="3" viewBox="0 0 6 3"><path d="M0 0H6 L3 3 Z" fill="#555"/></svg>
<svg style="left:1002px;top:131px;" width="8" height="8" viewBox="0 0 8 8"><path d="M0.5 0.5L7.500 7.500M7.500 0.5L0.5 7.500" stroke="#444" stroke-width="1.3"/></svg>
<span class="t" style="left:818.8px;top:153.6px;font-size:9.2px;line-height:12px;height:12px;color:#c0392b;font-weight:normal;font-style:normal;letter-spacing:-0.15px;text-decoration:underline;">Stop showing ideas for new presentations</span>
<div class="a" style="left:1001px;top:170.5px;width:10.8px;height:331.5px;background:#dedede"></div>
<div class="a" style="left:1001px;top:170.3px;width:10.8px;height:10.8px;background:#fff;border:1px solid #c0c0c0"></div>
<svg style="left:1003.9px;top:174px;" width="5" height="3" viewBox="0 0 5 3"><path d="M0 3L2.5 0L5 3Z" fill="#555"/></svg>
<div class="a" style="left:1001px;top:181px;width:10.8px;height:114.3px;background:#fff;border:1px solid #d0d0d0;border-top:none"></div>
<div class="a" style="left:1001px;top:491px;width:10.8px;height:11.5px;background:#fff;border:1px solid #c0c0c0"></div>
<svg style="left:1003.9px;top:495.5px;" width="5" height="3" viewBox="0 0 5 3"><path d="M0 0H5L2.5 3Z" fill="#555"/></svg>
<svg style="left:823px;top:180px;" width="170" height="96" viewBox="0 0 170 96"><defs><linearGradient id="bl" x1="0" y1="0" x2="0.25" y2="1"><stop offset="0" stop-color="#3d66b8"/><stop offset="0.55" stop-color="#36529a"/><stop offset="1" stop-color="#333753"/></linearGradient><filter id="bf" x="-10%" y="-10%" width="120%" height="120%"><feGaussianBlur stdDeviation="0.55"/></filter><filter id="bf2" x="-20%" y="-20%" width="140%" height="140%"><feGaussianBlur stdDeviation="2"/></filter></defs><rect x="0.5" y="0.5" width="169" height="95" fill="#fff" stroke="#d2d2d2"/><path d="M32.5 19.8C37.6 9.2 34.6 12.5 45.8 8.4C57.0 4.3 54.0 7.1 66.2 7.4C78.4 7.8 73.0 10.9 82.5 9.5C92.1 8.1 86.7 6.4 94.9 3.3C103.0 0.2 98.9 -0.5 107.1 0.2C115.2 0.9 113.2 -1.1 119.4 5.4C125.6 11.9 120.8 11.6 125.6 19.8C130.4 27.9 129.7 19.7 133.8 29.9C137.8 40.1 137.5 36.6 137.8 50.3C138.1 63.9 138.2 60.6 134.8 70.9C131.3 81.1 134.0 75.6 127.6 81.0C121.1 86.5 124.9 83.1 115.4 87.2C105.8 91.3 110.6 92.0 99.0 93.3C87.4 94.7 91.5 93.3 80.6 91.3C69.6 89.2 75.8 89.3 66.2 87.2C56.6 85.2 61.4 87.9 51.9 85.2C42.4 82.4 46.1 82.5 37.6 79.0C29.1 75.6 29.5 81.0 26.4 74.9C23.3 68.8 27.0 72.2 28.4 60.6C29.7 49.0 29.1 53.8 30.4 40.1C31.8 26.5 27.4 30.3 32.5 19.8Z" fill="#b8c2d8" opacity="0.6" filter="url(#bf2)"/><path d="M36.6 22.0C37.4 18.0 37.2 20.0 39.8 17.3C42.4 14.6 41.3 15.9 44.3 14.0C47.3 12.1 45.7 12.6 48.8 11.6C51.9 10.6 49.0 10.9 53.6 11.0C58.1 11.1 57.8 12.1 62.5 12.0C67.1 11.9 63.9 11.2 67.5 10.7C71.1 10.2 70.0 10.3 73.3 10.4C76.6 10.6 74.5 10.5 77.5 11.2C80.6 12.0 79.9 13.2 82.5 12.6C85.1 12.0 83.0 10.3 85.2 9.5C87.4 8.7 86.2 11.1 89.0 10.2C91.9 9.4 90.6 8.0 93.8 6.9C97.0 5.8 95.8 7.9 98.5 7.0C101.3 6.0 100.0 5.0 102.2 4.1C104.3 3.1 103.0 3.4 105.0 4.1C107.0 4.8 105.4 4.6 108.1 6.1C110.9 7.5 110.5 7.4 113.2 8.3C115.9 9.3 114.2 7.6 116.3 8.8C118.4 10.0 118.0 8.7 119.4 11.8C120.8 14.9 119.5 14.7 120.4 18.1C121.3 21.5 120.6 20.0 122.0 22.0C123.4 24.0 122.9 22.4 124.5 24.0C126.1 25.6 125.2 24.4 126.9 26.8C128.5 29.2 127.8 27.4 129.5 31.3C131.2 35.2 131.2 34.7 132.1 38.6C133.0 42.5 131.7 39.2 132.1 43.0C132.5 46.8 132.7 45.5 133.2 50.0C133.7 54.5 133.8 51.9 133.6 56.5C133.4 61.0 133.6 59.4 132.6 63.6C131.5 67.7 131.8 66.2 130.4 68.9C129.0 71.6 129.6 69.7 128.2 71.7C126.9 73.7 127.8 72.6 126.4 74.8C124.9 77.0 126.2 76.7 123.8 78.2C121.4 79.7 121.2 78.7 119.0 79.5C116.9 80.2 119.5 79.0 117.4 80.5C115.3 82.0 116.3 82.0 112.6 83.9C108.9 85.8 109.7 84.9 106.2 86.2C102.7 87.4 104.9 86.6 102.0 87.7C99.1 88.8 101.0 89.3 97.6 89.5C94.2 89.7 95.1 89.1 91.9 88.4C88.7 87.6 91.8 87.5 88.0 87.3C84.3 87.0 84.7 88.2 80.7 87.6C76.7 87.0 78.8 86.5 76.1 85.4C73.3 84.4 75.3 85.0 72.4 84.4C69.6 83.9 70.7 84.0 67.5 83.9C64.3 83.8 65.8 84.4 62.7 84.1C59.6 83.7 61.1 83.5 58.3 82.8C55.5 82.1 56.7 83.3 54.4 82.0C52.1 80.7 54.7 80.4 51.4 78.9C48.0 77.4 47.7 78.3 44.4 77.4C41.0 76.6 43.2 77.0 41.3 76.4C39.4 75.8 41.3 76.5 38.7 75.5C36.2 74.5 36.2 74.3 33.7 73.4C31.1 72.4 32.0 74.3 31.0 72.6C30.0 70.9 30.7 70.8 30.6 68.1C30.5 65.5 30.0 67.5 30.7 64.6C31.5 61.7 31.5 62.8 32.8 59.5C34.1 56.2 34.0 58.4 34.7 54.8C35.4 51.1 34.8 53.2 34.8 48.6C34.8 43.9 35.0 45.6 34.7 40.7C34.4 35.8 32.9 37.7 33.8 33.9C34.7 30.0 36.5 33.2 37.4 29.2C38.4 25.3 35.8 26.0 36.6 22.0Z" fill="url(#bl)" filter="url(#bf)"/><circle cx="44" cy="12" r="0.9" fill="#5878b8" opacity="0.75"/><circle cx="47" cy="9" r="0.8" fill="#5878b8" opacity="0.75"/><circle cx="50" cy="7" r="0.6" fill="#5878b8" opacity="0.75"/><circle cx="52" cy="11" r="0.7" fill="#5878b8" opacity="0.75"/><circle cx="32" cy="20" r="0.7" fill="#5878b8" opacity="0.75"/><circle cx="27" cy="31" r="0.6" fill="#5878b8" opacity="0.75"/><circle cx="24" cy="44" r="0.6" fill="#5878b8" opacity="0.75"/><circle cx="20" cy="58" r="0.7" fill="#5878b8" opacity="0.75"/><circle cx="24" cy="68" r="0.6" fill="#5878b8" opacity="0.75"/><circle cx="29" cy="80" r="0.6" fill="#5878b8" opacity="0.75"/><circle cx="139" cy="17" r="0.7" fill="#5878b8" opacity="0.75"/><circle cx="137" cy="31" r="0.5" fill="#5878b8" opacity="0.75"/><circle cx="141" cy="41" r="0.5" fill="#5878b8" opacity="0.75"/><circle cx="135" cy="80" r="0.9" fill="#5878b8" opacity="0.75"/><circle cx="131" cy="84" r="0.6" fill="#5878b8" opacity="0.75"/><circle cx="113" cy="90" r="0.6" fill="#5878b8" opacity="0.75"/><circle cx="105" cy="91" r="0.5" fill="#5878b8" opacity="0.75"/><circle cx="64" cy="87" r="0.5" fill="#5878b8" opacity="0.75"/><circle cx="116" cy="12" r="1" fill="#5878b8" opacity="0.75"/><circle cx="118" cy="10" r="0.6" fill="#5878b8" opacity="0.75"/><g fill="none" stroke="#fff" stroke-width="0.9" stroke-dasharray="1.2 0.8"><rect x="41" y="28.5" width="87.500" height="27"/><rect x="41" y="57" width="87.500" height="10.5"/></g></svg>
<span class="t" style="left:874.2px;top:224.3px;font-size:9.6px;line-height:12px;height:12px;color:#fff;font-weight:normal;font-style:normal;letter-spacing:-0.01px;">Click to add title</span>
<span class="t" style="left:891px;top:237.5px;font-size:3.6px;line-height:5px;height:5px;color:#e8ecf5;font-weight:normal;font-style:normal;letter-spacing:0.13px;">Click to add subtitle</span>
<svg style="left:824px;top:290px;overflow:hidden" width="168" height="95" viewBox="0 0 168 95"><defs><linearGradient id="g2" x1="0" y1="0" x2="1" y2="0"><stop offset="0.32" stop-color="#000"/><stop offset="0.5" stop-color="#2a1a15"/><stop offset="0.68" stop-color="#6a4639"/><stop offset="0.85" stop-color="#8a5e4c"/><stop offset="1" stop-color="#8e6250"/></linearGradient><linearGradient id="fl" x1="0" y1="0" x2="1" y2="0"><stop offset="0.55" stop-color="#000" stop-opacity="0"/><stop offset="0.85" stop-color="#9a6a56" stop-opacity="0.55"/><stop offset="1" stop-color="#a87660" stop-opacity="0.9"/></linearGradient><radialGradient id="sp" cx="0.6" cy="0.35" r="0.7"><stop offset="0" stop-color="#e0a828"/><stop offset="0.6" stop-color="#b9831c"/><stop offset="1" stop-color="#6a4710"/></radialGradient><linearGradient id="cf" x1="0" y1="0" x2="1" y2="1"><stop offset="0" stop-color="#c08a70"/><stop offset="1" stop-color="#8e5e4a"/></linearGradient><filter id="sh2"><feGaussianBlur stdDeviation="1.5"/></filter></defs><rect x="0" y="0" width="169" height="95" fill="url(#g2)"/><rect x="0" y="75" width="169" height="20" fill="url(#fl)"/><ellipse cx="105" cy="86" rx="30" ry="2.500" fill="#1a0e0a" opacity="0.7" filter="url(#sh2)"/><path d="M107 36L132.500 37.500L117.500 62.500L91 61Z" fill="#3a2620"/><path d="M132.500 37.500L148.500 60L131.500 86L117.500 62.500Z" fill="url(#cf)"/><path d="M91 61L117.500 62.500L131.500 86L107 82Z" fill="#4a2f27"/><circle cx="120.5" cy="25.3" r="11.2" fill="url(#sp)"/><rect x="7" y="8.3" width="9.800" height="2" fill="#e8761f"/><path d="M6 14.5H64 M6 60.5H64 M6.5 14V61 M63.5 14V61 M6 67.5H64 M6 84.5H64 M6.5 68V85 M63.5 68V85 " stroke="#f4f4f4" stroke-width="1" stroke-dasharray="1 1" fill="none" shape-rendering="crispEdges"/><rect x="7" y="62.700" width="55" height="1" fill="#d8d8d8"/></svg>
<span class="t" style="left:831.5px;top:330.2px;font-size:7.6px;line-height:10px;height:10px;color:#fff;font-weight:normal;font-style:normal;letter-spacing:-0.06px;">Click to add</span>
<span class="t" style="left:831.5px;top:339.3px;font-size:7.6px;line-height:10px;height:10px;color:#fff;font-weight:normal;font-style:normal;letter-spacing:0.33px;">title</span>
<span class="t" style="left:832px;top:357.3px;font-size:2.9px;line-height:4px;height:4px;color:#ddd;font-weight:normal;font-style:normal;letter-spacing:0.12px;">Click to add subtitle</span>
<svg style="left:824px;top:400px;overflow:hidden" width="168" height="94" viewBox="0 0 168 94"><defs><clipPath id="c3"><rect x="0" y="0" width="168" height="94"/></clipPath><filter id="gl" filterUnits="userSpaceOnUse" x="-20" y="-20" width="210" height="140"><feGaussianBlur stdDeviation="5"/></filter><filter id="gl1" filterUnits="userSpaceOnUse" x="-20" y="-20" width="210" height="140"><feGaussianBlur stdDeviation="0.8"/></filter><filter id="gl2" filterUnits="userSpaceOnUse" x="-20" y="-20" width="210" height="140"><feGaussianBlur stdDeviation="1.3"/></filter><filter id="gl3" filterUnits="userSpaceOnUse" x="-20" y="-20" width="210" height="140"><feGaussianBlur stdDeviation="2.2"/></filter></defs><rect x="0" y="0" width="168" height="94" fill="#000"/><g clip-path="url(#c3)"><path d="M90 76L124.500 10L166 74Z" fill="#17566a" opacity="0.8" filter="url(#gl)"/><path d="M86 74L110 104H172L172 74Z" fill="#1f7078" opacity="0.5" filter="url(#gl)"/><path d="M91.8 73.5L109.7 105.0" stroke="#62e070" stroke-width="3.2" opacity="0.6" filter="url(#gl2)"/><path d="M98 73.5L114.2 102.1" stroke="#86dcec" stroke-width="1.54" opacity="0.32" filter="url(#gl2)"/><path d="M104 73.5L118.8 99.3" stroke="#a4d4f2" stroke-width="1.4300000000000002" opacity="0.32" filter="url(#gl2)"/><path d="M110 73.5L123.5 96.6" stroke="#a4d4f2" stroke-width="1.4300000000000002" opacity="0.32" filter="url(#gl2)"/><path d="M116.5 73.5L128.3 93.6" stroke="#a4d4f2" stroke-width="1.4300000000000002" opacity="0.32" filter="url(#gl2)"/><path d="M122.5 73.5L132.9 90.5" stroke="#a4d4f2" stroke-width="1.4300000000000002" opacity="0.32" filter="url(#gl2)"/><path d="M128.5 73.5L137.3 87.8" stroke="#a4d4f2" stroke-width="1.4300000000000002" opacity="0.32" filter="url(#gl2)"/><path d="M134.3 73.5L141.7 86.0" stroke="#62e070" stroke-width="3.5200000000000005" opacity="0.6" filter="url(#gl2)"/><path d="M141 73.5L146.8 82.8" stroke="#74e2b4" stroke-width="1.7600000000000002" opacity="0.32" filter="url(#gl2)"/><path d="M147.5 73.5L151.3 79.8" stroke="#a4d4f2" stroke-width="1.4300000000000002" opacity="0.32" filter="url(#gl2)"/><path d="M153.5 73.5L155.7 77.1" stroke="#a4d4f2" stroke-width="1.4300000000000002" opacity="0.32" filter="url(#gl2)"/><path d="M159.3 73.0L160.1 74.3" stroke="#a4d4f2" stroke-width="1.4300000000000002" opacity="0.32" filter="url(#gl2)"/><path d="M91.8 72L124.3 14.7" stroke="#62e070" stroke-width="3.2" opacity="0.45" filter="url(#gl1)"/><path d="M91.8 72L124.3 14.7" stroke="#62e070" stroke-width="1.0" stroke-linecap="round"/><path d="M98 72L127.5 20" stroke="#86dcec" stroke-width="2.2399999999999998" opacity="0.45" filter="url(#gl1)"/><path d="M98 72L127.5 20" stroke="#86dcec" stroke-width="0.7" stroke-linecap="round"/><path d="M104 72L131 25" stroke="#a4d4f2" stroke-width="2.08" opacity="0.45" filter="url(#gl1)"/><path d="M104 72L131 25" stroke="#a4d4f2" stroke-width="0.65" stroke-linecap="round"/><path d="M110 72L134.5 30" stroke="#a4d4f2" stroke-width="2.08" opacity="0.45" filter="url(#gl1)"/><path d="M110 72L134.5 30" stroke="#a4d4f2" stroke-width="0.65" stroke-linecap="round"/><path d="M116.5 72L138 35.5" stroke="#a4d4f2" stroke-width="2.08" opacity="0.45" filter="url(#gl1)"/><path d="M116.5 72L138 35.5" stroke="#a4d4f2" stroke-width="0.65" stroke-linecap="round"/><path d="M122.5 72L141.5 41" stroke="#a4d4f2" stroke-width="2.08" opacity="0.45" filter="url(#gl1)"/><path d="M122.5 72L141.5 41" stroke="#a4d4f2" stroke-width="0.65" stroke-linecap="round"/><path d="M128.5 72L144.5 46" stroke="#a4d4f2" stroke-width="2.08" opacity="0.45" filter="url(#gl1)"/><path d="M128.5 72L144.5 46" stroke="#a4d4f2" stroke-width="0.65" stroke-linecap="round"/><path d="M134.3 72L147.7 49.2" stroke="#62e070" stroke-width="3.5200000000000005" opacity="0.45" filter="url(#gl1)"/><path d="M134.3 72L147.7 49.2" stroke="#62e070" stroke-width="1.1" stroke-linecap="round"/><path d="M141 72L151.5 55" stroke="#74e2b4" stroke-width="2.5600000000000005" opacity="0.45" filter="url(#gl1)"/><path d="M141 72L151.5 55" stroke="#74e2b4" stroke-width="0.8" stroke-linecap="round"/><path d="M147.5 72L154.5 60.5" stroke="#a4d4f2" stroke-width="2.08" opacity="0.45" filter="url(#gl1)"/><path d="M147.5 72L154.5 60.5" stroke="#a4d4f2" stroke-width="0.65" stroke-linecap="round"/><path d="M153.5 72L157.5 65.5" stroke="#a4d4f2" stroke-width="2.08" opacity="0.45" filter="url(#gl1)"/><path d="M153.5 72L157.5 65.5" stroke="#a4d4f2" stroke-width="0.65" stroke-linecap="round"/><path d="M159.3 71.5L160.7 69.2" stroke="#a4d4f2" stroke-width="2.08" opacity="0.45" filter="url(#gl1)"/><path d="M159.3 71.5L160.7 69.2" stroke="#a4d4f2" stroke-width="0.65" stroke-linecap="round"/><ellipse cx="140" cy="74.500" rx="30" ry="1.400" fill="#b4e2f4" opacity="0.55" filter="url(#gl3)"/><ellipse cx="150" cy="77" rx="22" ry="3" fill="#8fcbe6" opacity="0.4" filter="url(#gl3)"/></g><rect x="7" y="8.3" width="9.800" height="2" fill="#e8761f"/><path d="M6 14.5H64 M6 60.5H64 M6.5 14V61 M63.5 14V61 M6 67.5H64 M6 84.5H64 M6.5 68V85 M63.5 68V85 " stroke="#f4f4f4" stroke-width="1" stroke-dasharray="1 1" fill="none" shape-rendering="crispEdges"/><rect x="7" y="62.700" width="55" height="1" fill="#d8d8d8"/></svg>
<span class="t" style="left:831.5px;top:439.8px;font-size:7.6px;line-height:10px;height:10px;color:#fff;font-weight:normal;font-style:normal;letter-spacing:-0.06px;">Click to add</span>
<span class="t" style="left:831.5px;top:448.9px;font-size:7.6px;line-height:10px;height:10px;color:#fff;font-weight:normal;font-style:normal;letter-spacing:0.33px;">title</span>
<span class="t" style="left:832px;top:466.8px;font-size:2.9px;line-height:4px;height:4px;color:#ddd;font-weight:normal;font-style:normal;letter-spacing:0.12px;">Click to add subtitle</span>
<span class="t" style="left:839px;top:507.7px;font-size:9.2px;line-height:12px;height:12px;color:#444;font-weight:normal;font-style:normal;letter-spacing:-0.11px;">Powered by Office intelligent services</span>
<div class="a" style="left:76px;top:102.5px;width:258.3px;height:298px;background:#fff;border:1px solid #cbcbcb;box-shadow:1px 1px 3px rgba(0,0,0,.13)"></div>
<div class="a" style="left:77px;top:103.5px;width:243px;height:16px;background:#e8e8e8"></div>
<span class="t" style="left:84px;top:105.8px;font-size:9.2px;line-height:12px;height:12px;color:#666;font-weight:bold;font-style:normal;letter-spacing:-0.06px;">Office Theme</span>
<svg style="left:80px;top:123px;" width="75" height="44" viewBox="0 0 75 44"><rect x="0.5" y="0.5" width="74" height="43" fill="#fff" stroke="#858ba6"/><path d="M10 7.5H65 M10 22.5H65 M10.5 8V23 M64.5 8V23 M10 22.5H65 M10 32.5H65 M10.5 22V33 M64.5 22V33 " stroke="#4a4a4a" stroke-width="1" stroke-dasharray="1 1" fill="none" shape-rendering="crispEdges"/></svg>
<span class="t" style="left:98.5px;top:166.9px;font-size:9.2px;line-height:12px;height:12px;color:#555;font-weight:normal;font-style:normal;letter-spacing:-0.18px;">Title Slide</span>
<svg style="left:161px;top:123px;" width="75" height="44" viewBox="0 0 75 44"><rect x="0.5" y="0.5" width="74" height="43" fill="#fff" stroke="#858ba6"/><path d="M6 3.5H70 M6 12.5H70 M6.5 4V13 M69.5 4V13 M6 12.5H70 M6 37.5H70 M6.5 12V38 M69.5 12V38 " stroke="#4a4a4a" stroke-width="1" stroke-dasharray="1 1" fill="none" shape-rendering="crispEdges"/><g transform="translate(38 25)"><rect x="-13" y="-4.200" width="6" height="3.800" fill="#fff" stroke="#b9bdc4" stroke-width="0.600"/><path d="M-13 -2.800H-7" stroke="#c9ccd2" stroke-width="0.600"/><rect x="-5.200" y="-3.800" width="1.300" height="3.200" fill="#3b78d0"/><rect x="-3.600" y="-4.400" width="1.600" height="3.800" fill="#f0b64a"/><rect x="-1.700" y="-3.600" width="1.300" height="3" fill="#8a8f98"/><rect x="1" y="-4.200" width="5.500" height="3.600" fill="#f4f7f4" stroke="#c3cbc5" stroke-width="0.500"/><rect x="1.300" y="-3.900" width="3" height="1.200" fill="#4da06a"/><rect x="-13" y="0.400" width="6" height="3.800" fill="#fff" stroke="#b9bdc4" stroke-width="0.600"/><path d="M-12.500 3.600L-10.500 2.200L-9 3.200L-7.500 2.400" stroke="#6aa5e0" stroke-width="0.700" fill="none"/><rect x="-5.500" y="0.400" width="5.500" height="3.800" fill="#fff" stroke="#b9bdc4" stroke-width="0.600"/><path d="M-5 3.600L-3.500 2.400L-2 3.400L-0.500 2.600" stroke="#6aa5e0" stroke-width="0.700" fill="none"/><rect x="-3.500" y="0.400" width="1" height="1.200" fill="#f0c060"/><rect x="1" y="0.400" width="5.500" height="3.800" fill="#f2f2f2" stroke="#b9bdc4" stroke-width="0.600"/><circle cx="10.500" cy="0" r="3.600" fill="#f2f5f9" stroke="#c5ccd6" stroke-width="0.500"/><path d="M8 2.200C9 0.500 11.500 1 12.500 -1C13 -2.200 12 -3 11.300 -2.800C13.500 -2 14 1 12 2.800C10.500 3.600 9 3.200 8 2.200Z" fill="#3d83dc"/></g></svg>
<span class="t" style="left:164.25px;top:166.9px;font-size:9.2px;line-height:12px;height:12px;color:#555;font-weight:normal;font-style:normal;letter-spacing:-0.07px;">Title and Content</span>
<svg style="left:242px;top:123px;" width="75" height="44" viewBox="0 0 75 44"><rect x="0.5" y="0.5" width="74" height="43" fill="#fff" stroke="#858ba6"/><path d="M6 11.5H69 M6 28.5H69 M6.5 12V29 M68.5 12V29 M6 28.5H69 M6 36.5H69 M6.5 28V37 M68.5 28V37 " stroke="#4a4a4a" stroke-width="1" stroke-dasharray="1 1" fill="none" shape-rendering="crispEdges"/></svg>
<span class="t" style="left:249.5px;top:166.9px;font-size:9.2px;line-height:12px;height:12px;color:#555;font-weight:normal;font-style:normal;letter-spacing:-0.24px;">Section Header</span>
<svg style="left:80px;top:195px;" width="75" height="44" viewBox="0 0 75 44"><rect x="0.5" y="0.5" width="74" height="43" fill="#fff" stroke="#858ba6"/><path d="M6 3.5H70 M6 12.5H70 M6.5 4V13 M69.5 4V13 M6 12.5H38 M6 37.5H38 M6.5 12V38 M37.5 12V38 M38 12.5H70 M38 37.5H70 M37.5 12V38 M69.5 12V38 " stroke="#4a4a4a" stroke-width="1" stroke-dasharray="1 1" fill="none" shape-rendering="crispEdges"/><g transform="translate(22 25.5)"><rect x="-13" y="-4.200" width="6" height="3.800" fill="#fff" stroke="#b9bdc4" stroke-width="0.600"/><path d="M-13 -2.800H-7" stroke="#c9ccd2" stroke-width="0.600"/><rect x="-5.200" y="-3.800" width="1.300" height="3.200" fill="#3b78d0"/><rect x="-3.600" y="-4.400" width="1.600" height="3.800" fill="#f0b64a"/><rect x="-1.700" y="-3.600" width="1.300" height="3" fill="#8a8f98"/><rect x="1" y="-4.200" width="5.500" height="3.600" fill="#f4f7f4" stroke="#c3cbc5" stroke-width="0.500"/><rect x="1.300" y="-3.900" width="3" height="1.200" fill="#4da06a"/><rect x="-13" y="0.400" width="6" height="3.800" fill="#fff" stroke="#b9bdc4" stroke-width="0.600"/><path d="M-12.500 3.600L-10.500 2.200L-9 3.200L-7.500 2.400" stroke="#6aa5e0" stroke-width="0.700" fill="none"/><rect x="-5.500" y="0.400" width="5.500" height="3.800" fill="#fff" stroke="#b9bdc4" stroke-width="0.600"/><path d="M-5 3.600L-3.500 2.400L-2 3.400L-0.500 2.600" stroke="#6aa5e0" stroke-width="0.700" fill="none"/><rect x="-3.500" y="0.400" width="1" height="1.200" fill="#f0c060"/><rect x="1" y="0.400" width="5.500" height="3.800" fill="#f2f2f2" stroke="#b9bdc4" stroke-width="0.600"/><circle cx="10.500" cy="0" r="3.600" fill="#f2f5f9" stroke="#c5ccd6" stroke-width="0.500"/><path d="M8 2.200C9 0.500 11.500 1 12.500 -1C13 -2.200 12 -3 11.300 -2.800C13.500 -2 14 1 12 2.800C10.500 3.600 9 3.200 8 2.200Z" fill="#3d83dc"/></g><g transform="translate(53.5 25.5)"><rect x="-13" y="-4.200" width="6" height="3.800" fill="#fff" stroke="#b9bdc4" stroke-width="0.600"/><path d="M-13 -2.800H-7" stroke="#c9ccd2" stroke-width="0.600"/><rect x="-5.200" y="-3.800" width="1.300" height="3.200" fill="#3b78d0"/><rect x="-3.600" y="-4.400" width="1.600" height="3.800" fill="#f0b64a"/><rect x="-1.700" y="-3.600" width="1.300" height="3" fill="#8a8f98"/><rect x="1" y="-4.200" width="5.500" height="3.600" fill="#f4f7f4" stroke="#c3cbc5" stroke-width="0.500"/><rect x="1.300" y="-3.900" width="3" height="1.200" fill="#4da06a"/><rect x="-13" y="0.400" width="6" height="3.800" fill="#fff" stroke="#b9bdc4" stroke-width="0.600"/><path d="M-12.500 3.600L-10.500 2.200L-9 3.200L-7.500 2.400" stroke="#6aa5e0" stroke-width="0.700" fill="none"/><rect x="-5.500" y="0.400" width="5.500" height="3.800" fill="#fff" stroke="#b9bdc4" stroke-width="0.600"/><path d="M-5 3.600L-3.500 2.400L-2 3.400L-0.500 2.600" stroke="#6aa5e0" stroke-width="0.700" fill="none"/><rect x="-3.500" y="0.400" width="1" height="1.200" fill="#f0c060"/><rect x="1" y="0.400" width="5.500" height="3.800" fill="#f2f2f2" stroke="#b9bdc4" stroke-width="0.600"/><circle cx="10.500" cy="0" r="3.600" fill="#f2f5f9" stroke="#c5ccd6" stroke-width="0.500"/><path d="M8 2.200C9 0.500 11.500 1 12.500 -1C13 -2.200 12 -3 11.300 -2.800C13.500 -2 14 1 12 2.800C10.500 3.600 9 3.200 8 2.200Z" fill="#3d83dc"/></g></svg>
<span class="t" style="left:91.75px;top:238.9px;font-size:9.2px;line-height:12px;height:12px;color:#555;font-weight:normal;font-style:normal;letter-spacing:-0.01px;">Two Content</span>
<svg style="left:161px;top:195px;" width="75" height="44" viewBox="0 0 75 44"><rect x="0.5" y="0.5" width="74" height="43" fill="#fff" stroke="#858ba6"/><path d="M6 3.5H70 M6 12.5H70 M6.5 4V13 M69.5 4V13 M6 12.5H38 M6 16.5H38 M6.5 12V17 M37.5 12V17 M38 12.5H70 M38 16.5H70 M37.5 12V17 M69.5 12V17 M6 16.5H38 M6 37.5H38 M6.5 16V38 M37.5 16V38 M38 16.5H70 M38 37.5H70 M37.5 16V38 M69.5 16V38 " stroke="#4a4a4a" stroke-width="1" stroke-dasharray="1 1" fill="none" shape-rendering="crispEdges"/><g transform="translate(22 27.5)"><rect x="-13" y="-4.200" width="6" height="3.800" fill="#fff" stroke="#b9bdc4" stroke-width="0.600"/><path d="M-13 -2.800H-7" stroke="#c9ccd2" stroke-width="0.600"/><rect x="-5.200" y="-3.800" width="1.300" height="3.200" fill="#3b78d0"/><rect x="-3.600" y="-4.400" width="1.600" height="3.800" fill="#f0b64a"/><rect x="-1.700" y="-3.600" width="1.300" height="3" fill="#8a8f98"/><rect x="1" y="-4.200" width="5.500" height="3.600" fill="#f4f7f4" stroke="#c3cbc5" stroke-width="0.500"/><rect x="1.300" y="-3.900" width="3" height="1.200" fill="#4da06a"/><rect x="-13" y="0.400" width="6" height="3.800" fill="#fff" stroke="#b9bdc4" stroke-width="0.600"/><path d="M-12.500 3.600L-10.500 2.200L-9 3.200L-7.500 2.400" stroke="#6aa5e0" stroke-width="0.700" fill="none"/><rect x="-5.500" y="0.400" width="5.500" height="3.800" fill="#fff" stroke="#b9bdc4" stroke-width="0.600"/><path d="M-5 3.600L-3.500 2.400L-2 3.400L-0.500 2.600" stroke="#6aa5e0" stroke-width="0.700" fill="none"/><rect x="-3.500" y="0.400" width="1" height="1.200" fill="#f0c060"/><rect x="1" y="0.400" width="5.500" height="3.800" fill="#f2f2f2" stroke="#b9bdc4" stroke-width="0.600"/><circle cx="10.500" cy="0" r="3.600" fill="#f2f5f9" stroke="#c5ccd6" stroke-width="0.500"/><path d="M8 2.200C9 0.500 11.500 1 12.500 -1C13 -2.200 12 -3 11.300 -2.800C13.500 -2 14 1 12 2.800C10.500 3.600 9 3.200 8 2.200Z" fill="#3d83dc"/></g><g transform="translate(53.5 27.5)"><rect x="-13" y="-4.200" width="6" height="3.800" fill="#fff" stroke="#b9bdc4" stroke-width="0.600"/><path d="M-13 -2.800H-7" stroke="#c9ccd2" stroke-width="0.600"/><rect x="-5.200" y="-3.800" width="1.300" height="3.200" fill="#3b78d0"/><rect x="-3.600" y="-4.400" width="1.600" height="3.800" fill="#f0b64a"/><rect x="-1.700" y="-3.600" width="1.300" height="3" fill="#8a8f98"/><rect x="1" y="-4.200" width="5.500" height="3.600" fill="#f4f7f4" stroke="#c3cbc5" stroke-width="0.500"/><rect x="1.300" y="-3.900" width="3" height="1.200" fill="#4da06a"/><rect x="-13" y="0.400" width="6" height="3.800" fill="#fff" stroke="#b9bdc4" stroke-width="0.600"/><path d="M-12.500 3.600L-10.500 2.200L-9 3.200L-7.500 2.400" stroke="#6aa5e0" stroke-width="0.700" fill="none"/><rect x="-5.500" y="0.400" width="5.500" height="3.800" fill="#fff" stroke="#b9bdc4" stroke-width="0.600"/><path d="M-5 3.600L-3.500 2.400L-2 3.400L-0.500 2.600" stroke="#6aa5e0" stroke-width="0.700" fill="none"/><rect x="-3.500" y="0.400" width="1" height="1.200" fill="#f0c060"/><rect x="1" y="0.400" width="5.500" height="3.800" fill="#f2f2f2" stroke="#b9bdc4" stroke-width="0.600"/><circle cx="10.500" cy="0" r="3.600" fill="#f2f5f9" stroke="#c5ccd6" stroke-width="0.500"/><path d="M8 2.200C9 0.500 11.500 1 12.500 -1C13 -2.200 12 -3 11.300 -2.800C13.500 -2 14 1 12 2.800C10.500 3.600 9 3.200 8 2.200Z" fill="#3d83dc"/></g></svg>
<span class="t" style="left:174.25px;top:238.9px;font-size:9.2px;line-height:12px;height:12px;color:#555;font-weight:normal;font-style:normal;letter-spacing:-0.10px;">Comparison</span>
<svg style="left:242px;top:195px;" width="75" height="44" viewBox="0 0 75 44"><rect x="0.5" y="0.5" width="74" height="43" fill="#fff" stroke="#858ba6"/><path d="M6 3.5H69 M6 11.5H69 M6.5 4V12 M68.5 4V12 " stroke="#4a4a4a" stroke-width="1" stroke-dasharray="1 1" fill="none" shape-rendering="crispEdges"/></svg>
<span class="t" style="left:260.25px;top:238.9px;font-size:9.2px;line-height:12px;height:12px;color:#555;font-weight:normal;font-style:normal;letter-spacing:0.00px;">Title Only</span>
<svg style="left:80px;top:267px;" width="75" height="44" viewBox="0 0 75 44"><rect x="0.5" y="0.5" width="74" height="43" fill="#fff" stroke="#858ba6"/><path d="" stroke="#4a4a4a" stroke-width="1" stroke-dasharray="1 1" fill="none" shape-rendering="crispEdges"/></svg>
<span class="t" style="left:106.75px;top:310.9px;font-size:9.2px;line-height:12px;height:12px;color:#555;font-weight:normal;font-style:normal;letter-spacing:-0.30px;">Blank</span>
<svg style="left:161px;top:267px;" width="75" height="44" viewBox="0 0 75 44"><rect x="0.5" y="0.5" width="74" height="43" fill="#fff" stroke="#858ba6"/><path d="M6 3.5H30 M6 13.5H30 M6.5 4V14 M29.5 4V14 M6 13.5H30 M6 36.5H30 M6.5 14V37 M29.5 14V37 M32 7.5H69 M32 36.5H69 M32.5 8V37 M68.5 8V37 " stroke="#4a4a4a" stroke-width="1" stroke-dasharray="1 1" fill="none" shape-rendering="crispEdges"/><g transform="translate(51 22)"><rect x="-13" y="-4.200" width="6" height="3.800" fill="#fff" stroke="#b9bdc4" stroke-width="0.600"/><path d="M-13 -2.800H-7" stroke="#c9ccd2" stroke-width="0.600"/><rect x="-5.200" y="-3.800" width="1.300" height="3.200" fill="#3b78d0"/><rect x="-3.600" y="-4.400" width="1.600" height="3.800" fill="#f0b64a"/><rect x="-1.700" y="-3.600" width="1.300" height="3" fill="#8a8f98"/><rect x="1" y="-4.200" width="5.500" height="3.600" fill="#f4f7f4" stroke="#c3cbc5" stroke-width="0.500"/><rect x="1.300" y="-3.900" width="3" height="1.200" fill="#4da06a"/><rect x="-13" y="0.400" width="6" height="3.800" fill="#fff" stroke="#b9bdc4" stroke-width="0.600"/><path d="M-12.500 3.600L-10.500 2.200L-9 3.200L-7.500 2.400" stroke="#6aa5e0" stroke-width="0.700" fill="none"/><rect x="-5.500" y="0.400" width="5.500" height="3.800" fill="#fff" stroke="#b9bdc4" stroke-width="0.600"/><path d="M-5 3.600L-3.500 2.400L-2 3.400L-0.500 2.600" stroke="#6aa5e0" stroke-width="0.700" fill="none"/><rect x="-3.500" y="0.400" width="1" height="1.200" fill="#f0c060"/><rect x="1" y="0.400" width="5.500" height="3.800" fill="#f2f2f2" stroke="#b9bdc4" stroke-width="0.600"/><circle cx="10.500" cy="0" r="3.600" fill="#f2f5f9" stroke="#c5ccd6" stroke-width="0.500"/><path d="M8 2.200C9 0.500 11.500 1 12.500 -1C13 -2.200 12 -3 11.300 -2.800C13.500 -2 14 1 12 2.800C10.500 3.600 9 3.200 8 2.200Z" fill="#3d83dc"/></g></svg>
<span class="t" style="left:172.75px;top:310.9px;font-size:9.2px;line-height:12px;height:12px;color:#555;font-weight:normal;font-style:normal;letter-spacing:0.04px;">Content with</span>
<span class="t" style="left:184.2px;top:321.9px;font-size:9.2px;line-height:12px;height:12px;color:#555;font-weight:normal;font-style:normal;letter-spacing:-0.44px;">Caption</span>
<svg style="left:242px;top:267px;" width="75" height="44" viewBox="0 0 75 44"><rect x="0.5" y="0.5" width="74" height="43" fill="#fff" stroke="#858ba6"/><path d="M6 3.5H30 M6 13.5H30 M6.5 4V14 M29.5 4V14 M6 13.5H30 M6 36.5H30 M6.5 14V37 M29.5 14V37 M32 7.5H69 M32 36.5H69 M32.5 8V37 M68.5 8V37 " stroke="#4a4a4a" stroke-width="1" stroke-dasharray="1 1" fill="none" shape-rendering="crispEdges"/><rect x="48" y="20" width="5" height="4" fill="#dfe9f5" stroke="#9ab0d0" stroke-width="0.5"/></svg>
<span class="t" style="left:256.0px;top:310.9px;font-size:9.2px;line-height:12px;height:12px;color:#555;font-weight:normal;font-style:normal;letter-spacing:-0.04px;">Picture with</span>
<span class="t" style="left:265.2px;top:321.9px;font-size:9.2px;line-height:12px;height:12px;color:#555;font-weight:normal;font-style:normal;letter-spacing:-0.44px;">Caption</span>
<div class="a" style="left:78px;top:336px;width:254px;height:1px;background:#e4e4e4"></div>
<svg style="left:80px;top:340px;" width="12" height="12" viewBox="0 0 12 12"><rect x="3.700" y="2.700" width="7.800" height="8.500" rx="1" fill="#fff" stroke="#8a8a8a" stroke-width="0.9"/><path d="M5.300 5.500H10M5.300 7.300H10M5.300 9H10" stroke="#b0b0b0" stroke-width="0.700"/><path d="M1.700 4.500V11" stroke="#8a8a8a" stroke-width="0.900"/><path d="M2.300 0V4.600M0 2.300H4.600M0.700 0.700L3.900 3.900M3.900 0.700L0.700 3.900" stroke="#eec370" stroke-width="0.900"/></svg>
<svg style="left:80.5px;top:358.5px;" width="12" height="12" viewBox="0 0 12 12"><rect x="0.500" y="0.500" width="7.500" height="6.500" rx="0.800" fill="#fff" stroke="#8a8a8a" stroke-width="0.9"/><rect x="2.700" y="4.300" width="8.500" height="7.200" rx="1" fill="#fff" stroke="#8a8a8a" stroke-width="0.900"/><path d="M4 7H10M4 9H10" stroke="#b0b0b0" stroke-width="0.700"/></svg>
<svg style="left:80px;top:376px;" width="12" height="12" viewBox="0 0 12 12"><rect x="2.500" y="3.500" width="8.200" height="7" rx="0.800" fill="#fff" stroke="#8a8a8a" stroke-width="0.9"/><path d="M4 6H9.300M4 8H9.300" stroke="#b0b0b0" stroke-width="0.700"/><path d="M2.300 0V4.600M0 2.300H4.600M0.700 0.700L3.900 3.900M3.900 0.700L0.700 3.900" stroke="#eec370" stroke-width="0.900"/></svg>
<span class="t" style="left:101.2px;top:340.9px;font-size:9.2px;line-height:12px;height:12px;color:#5c5c5c;font-weight:normal;font-style:normal;letter-spacing:-0.27px;"><u>D</u>uplicate Selected Slides</span>
<span class="t" style="left:101.2px;top:358.8px;font-size:9.2px;line-height:12px;height:12px;color:#5c5c5c;font-weight:normal;font-style:normal;letter-spacing:-0.14px;">Slides from Out<u>l</u>ine...</span>
<span class="t" style="left:101.2px;top:377.0px;font-size:9.2px;line-height:12px;height:12px;color:#5c5c5c;font-weight:normal;font-style:normal;letter-spacing:-0.49px;"><u>R</u>euse Slides...</span>
<svg style="left:326px;top:393px;" width="5" height="5" viewBox="0 0 5 5"><rect x="3" y="0" width="1.5" height="1.5" fill="#999"/><rect x="0" y="3" width="1.5" height="1.5" fill="#999"/><rect x="3" y="3" width="1.5" height="1.5" fill="#999"/></svg>
<div class="a" style="left:0px;top:530px;width:1024px;height:16px;background:#f3f3f3"></div>
<span class="t" style="left:6.4px;top:531.8px;font-size:9px;line-height:12px;height:12px;color:#444;font-weight:normal;font-style:normal;letter-spacing:-0.26px;">Slide 1 of 1</span>
<svg style="left:62.5px;top:532.5px;" width="12" height="12" viewBox="0 0 10.500 10"><path d="M0.5 1.5H4V8.500H0.5ZM4 1.500H7M4 8.500H7.500V5" fill="none" stroke="#666" stroke-width="0.9"/><path d="M9 1L10 2L6.500 6L5.300 6.300L5.600 5Z" fill="none" stroke="#666" stroke-width="0.8"/></svg>
<span class="t" style="left:86.4px;top:531.8px;font-size:9px;line-height:12px;height:12px;color:#444;font-weight:normal;font-style:normal;letter-spacing:-0.24px;">English (United States)</span>
<svg style="left:638px;top:533.5px;" width="9" height="9" viewBox="0 0 9 9"><path d="M0 8.500H9M0 6.500H9" stroke="#555" stroke-width="0.9"/><path d="M1.500 4.500H7.500L4.500 1Z" fill="#555"/></svg>
<span class="t" style="left:651px;top:531.8px;font-size:9px;line-height:12px;height:12px;color:#444;font-weight:normal;font-style:normal;letter-spacing:-0.30px;">Notes</span>
<svg style="left:688px;top:533.5px;" width="10" height="9" viewBox="0 0 10 9"><path d="M0.5 0.5H9.500V6H4L2 8.500V6H0.5Z" fill="#555"/></svg>
<span class="t" style="left:701px;top:531.8px;font-size:9px;line-height:12px;height:12px;color:#444;font-weight:normal;font-style:normal;letter-spacing:-0.44px;">Comments</span>
<div class="a" style="left:756px;top:530.5px;width:29.5px;height:15.5px;background:#c6c6c6"></div>
<svg style="left:765.5px;top:533.5px;" width="10" height="9" viewBox="0 0 10 9"><rect x="0.5" y="0.5" width="9" height="8" fill="none" stroke="#555" stroke-width="0.9"/><path d="M3.500 0.5V8.500" stroke="#555" stroke-width="0.9"/><rect x="4.800" y="2" width="3.400" height="2.200" fill="none" stroke="#555" stroke-width="0.7"/></svg>
<svg style="left:796px;top:533.5px;" width="10" height="9" viewBox="0 0 10 9"><g fill="none" stroke="#666" stroke-width="0.9"><rect x="0.5" y="0.5" width="3.500" height="3"/><rect x="5.500" y="0.5" width="3.500" height="3"/><rect x="0.5" y="5.500" width="3.500" height="3"/><rect x="5.500" y="5.500" width="3.500" height="3"/></g></svg>
<svg style="left:825.5px;top:533.5px;" width="10" height="9" viewBox="0 0 10 9"><path d="M5 1V8.500M0.5 0.5H4L5 1.200L6 0.5H9.500V8H6L5 8.700L4 8H0.5Z" fill="none" stroke="#666" stroke-width="0.9"/><path d="M1.800 2.500H3.500M1.800 4.200H3.500M1.800 6H3.500M6.500 2.500H8.200M6.500 4.200H8.200M6.500 6H8.200" stroke="#888" stroke-width="0.6"/></svg>
<svg style="left:855px;top:533px;" width="10" height="10" viewBox="0 0 10 10"><path d="M0 0.5H10" stroke="#666"/><rect x="1" y="1" width="8" height="4.500" fill="none" stroke="#666" stroke-width="0.9"/><path d="M5 5.500V8.500M3 9H7" stroke="#666" stroke-width="0.9"/></svg>
<div class="a" style="left:880px;top:537.5px;width:5.5px;height:1px;background:#555"></div>
<div class="a" style="left:889.5px;top:537.5px;width:75px;height:1px;background:#b4b4b4"></div>
<div class="a" style="left:927px;top:535.5px;width:1px;height:5px;background:#b4b4b4"></div>
<div class="a" style="left:913.5px;top:533px;width:3px;height:10px;background:#555"></div>
<div class="a" style="left:968.5px;top:537.5px;width:6px;height:1px;background:#555"></div>
<div class="a" style="left:971px;top:535px;width:1px;height:6px;background:#555"></div>
<span class="t" style="left:984.3px;top:531.8px;font-size:9px;line-height:12px;height:12px;color:#444;font-weight:normal;font-style:normal;letter-spacing:-0.67px;">68%</span>
<svg style="left:1009.5px;top:533.5px;" width="9" height="9" viewBox="0 0 9 9"><rect x="0.5" y="0.5" width="8" height="8" fill="none" stroke="#777" stroke-width="0.9"/><path d="M2 3.500V2H3.500M5.500 2H7V3.500M7 5.500V7H5.500M3.500 7H2V5.500" fill="none" stroke="#555" stroke-width="0.9"/></svg>
<div class="a" style="left:0px;top:545.7px;width:1024px;height:30.5px;background:#07080d"></div>
<div class="a" style="left:36px;top:545.7px;width:258px;height:30.5px;background:#373737"></div>
<svg style="left:11.7px;top:554.6px;" width="12.5" height="12.5" viewBox="0 0 12.5 12.5"><path d="M0 1.700L5 1V5.800H0ZM6 0.850L12.500 0V5.800H6ZM0 6.700H5V11.500L0 10.800ZM6 6.700H12.500V12.500L6 11.650Z" fill="#fff"/></svg>
<svg style="left:43.2px;top:553.2px;" width="16" height="16" viewBox="0 0 16 16"><circle cx="8" cy="8" r="6.900" fill="none" stroke="#fff" stroke-width="1.900"/></svg>
<span class="t" style="left:66.5px;top:554.6px;font-size:11px;line-height:14px;height:14px;color:#979797;font-weight:normal;font-style:normal;letter-spacing:-0.05px;">I&#x27;m Cortana. Ask me anything.</span>
<svg style="left:304px;top:555.2px;" width="16" height="12" viewBox="0 0 16 12"><rect x="3" y="0.600" width="10" height="10.500" rx="1.200" fill="none" stroke="#fff" stroke-width="1.100"/><path d="M2 2.500H0.600V9.200H2M14 2.500H15.400V9.200H14" fill="none" stroke="#fff" stroke-width="1"/></svg>
<div class="a" style="left:478.5px;top:545.5px;width:34.5px;height:30.5px;background:#2f2f33"></div>
<div class="a" style="left:335px;top:574px;width:29px;height:2px;background:#76b9ed"></div>
<div class="a" style="left:371.5px;top:574px;width:29.5px;height:2px;background:#76b9ed"></div>
<div class="a" style="left:478.5px;top:574px;width:34.5px;height:2px;background:#76b9ed"></div>
<div class="a" style="left:518.5px;top:574px;width:28.5px;height:2px;background:#76b9ed"></div>
<div class="a" style="left:556px;top:574px;width:29.5px;height:2px;background:#76b9ed"></div>
<svg style="left:0px;top:0px;" width="1024" height="576" viewBox="0 0 1024 576"><g transform="translate(349.3 560.8) scale(1.12)"><circle r="8" fill="#fff"/><path d="M0 0L-6.930 -4A8 8 0 0 1 6.930 -4Z" fill="#db4437"/><path d="M0 0L6.930 -4A8 8 0 0 1 0 8Z" fill="#f4b400"/><path d="M0 0L0 8A8 8 0 0 1 -6.930 -4Z" fill="#0f9d58"/><circle r="3.700" fill="#fff"/><circle r="2.900" fill="#4285f4"/><circle cx="3.500" cy="3.800" r="5" fill="#c9c2b8"/><circle cx="3.500" cy="2.500" r="2" fill="#6e5a4a"/><path d="M0.500 7.500Q3.500 3.500 6.500 7.500Z" fill="#4a5a7a"/></g></svg>
<svg style="left:376.7px;top:552.7px;" width="20" height="17" viewBox="0 0 20 17"><path d="M0.5 2H7L8.500 3.500H19.500V15.500H0.500Z" fill="#f7cf5e"/><path d="M0.5 5.500H19.500V15.500H0.500Z" fill="#fbe08a"/><path d="M4.500 9.500H15.500V16.500H12.500V13H7.500V16.500H4.500Z" fill="#38a0e8"/></svg>
<svg style="left:413px;top:552px;" width="20" height="18" viewBox="0 0 20 18"><rect x="6" y="0.500" width="13.500" height="17" rx="1" fill="#41a5ee"/><rect x="6" y="4.750" width="13.500" height="4.250" fill="#2b7cd3"/><rect x="6" y="9" width="13.500" height="4.250" fill="#185abd"/><rect x="6" y="13.250" width="13.500" height="4.250" rx="1" fill="#103f91"/><rect x="0.500" y="4" width="10.500" height="10.500" rx="1" fill="#185abd"/></svg>
<span class="t" style="left:415.3px;top:555.8px;font-size:7.5px;line-height:10px;height:10px;color:#fff;font-weight:bold;font-style:normal;letter-spacing:0.31px;">W</span>
<svg style="left:449.5px;top:552px;" width="20" height="18" viewBox="0 0 20 18"><rect x="6" y="0.500" width="13.500" height="17" rx="1" fill="#21a366"/><rect x="12.750" y="0.500" width="6.750" height="5.700" fill="#33c481"/><rect x="6" y="6.200" width="6.750" height="5.600" fill="#107c41"/><rect x="6" y="11.800" width="13.500" height="5.700" rx="1" fill="#185c37"/><rect x="0.500" y="4" width="10.500" height="10.500" rx="1" fill="#107c41"/></svg>
<span class="t" style="left:452.8px;top:555.8px;font-size:7.5px;line-height:10px;height:10px;color:#fff;font-weight:bold;font-style:normal;letter-spacing:0.38px;">X</span>
<svg style="left:485.5px;top:552px;" width="20" height="18" viewBox="0 0 20 18"><circle cx="11.500" cy="9" r="8.500" fill="#ed6c47"/><path d="M11.500 0.500A8.500 8.500 0 0 1 20 9H11.500Z" fill="#ff8f6b"/><path d="M3 9H20A8.500 8.500 0 0 1 3 9Z" fill="#d35230"/><rect x="0.500" y="4" width="10.500" height="10.500" rx="1" fill="#c43e1c"/></svg>
<span class="t" style="left:488.7px;top:555.8px;font-size:7.5px;line-height:10px;height:10px;color:#fff;font-weight:bold;font-style:normal;letter-spacing:-0.02px;">P</span>
<svg style="left:0px;top:0px;" width="1024" height="576" viewBox="0 0 1024 576"><g transform="translate(533.5 560.6) scale(1.12)"><circle r="8" fill="#fff"/><path d="M0 0L-6.930 -4A8 8 0 0 1 6.930 -4Z" fill="#db4437"/><path d="M0 0L6.930 -4A8 8 0 0 1 0 8Z" fill="#f4b400"/><path d="M0 0L0 8A8 8 0 0 1 -6.930 -4Z" fill="#0f9d58"/><circle r="3.700" fill="#fff"/><circle r="2.900" fill="#4285f4"/><circle cx="3.800" cy="3.500" r="5.200" fill="#e8c8b8"/><path d="M-1.200 2Q3.800 -4 8.800 2Q6 -0.500 3.800 0Q1.500 -0.500 -1.200 2Z" fill="#3a2a2a"/><circle cx="2.200" cy="3.500" r="0.700" fill="#333"/><circle cx="5.500" cy="3.500" r="0.700" fill="#333"/><path d="M2.500 6Q3.800 7 5.200 6" stroke="#c0504d" stroke-width="0.800" fill="none"/></g></svg>
<svg style="left:559px;top:551.5px;" width="20" height="19" viewBox="0 0 20 19"><path d="M9 3C14 2 18 5 17.500 9.500C17 13 14 12 12.500 13.500C11.500 15 13 17 9.500 17.500C4.500 18 0.500 14.500 1 10C1.500 6 5 3.500 9 3Z" fill="#e8edf2" stroke="#9aa5b0" stroke-width="0.600"/><circle cx="5" cy="9" r="1.500" fill="#e84a3a"/><circle cx="8.500" cy="6.500" r="1.500" fill="#f2b632"/><circle cx="5.500" cy="13" r="1.500" fill="#3a8ee8"/><circle cx="12.500" cy="7" r="1.400" fill="#3ab06a"/><path d="M17.500 0.500L19 1.500L11 12.500L9.500 11.500Z" fill="#d89a4a"/><path d="M9.500 11.500L11 12.500L9 15.500L7.800 14.700Z" fill="#6a7a8a"/></svg>
<svg style="left:836.5px;top:557.5px;" width="11" height="6" viewBox="0 0 11 6"><path d="M0.5 5.500L5.500 0.500L10.500 5.500" fill="none" stroke="#e4e4e4" stroke-width="1"/></svg>
<svg style="left:853px;top:554.5px;" width="13" height="12" viewBox="0 0 13 12"><path d="M3.250 0L6.500 2L3.250 4L0 2ZM9.750 0L13 2L9.750 4L6.500 2ZM3.250 4L6.500 6L3.250 8L0 6ZM9.750 4L13 6L9.750 8L6.500 6ZM6.500 7L9.500 9L6.500 11L3.500 9Z" fill="#fff"/></svg>
<svg style="left:871.5px;top:556px;" width="13" height="9" viewBox="0 0 13 9"><rect x="2.500" y="2.500" width="9.500" height="5" fill="none" stroke="#fff" stroke-width="1"/><rect x="4" y="4" width="5" height="2" fill="#ddd"/><rect x="12" y="4" width="1" height="2" fill="#fff"/><path d="M0.500 0.500V3M2.500 0.500V3M0 3H3V5H1.500V7" stroke="#fff" stroke-width="0.900" fill="none"/></svg>
<svg style="left:890.5px;top:555px;" width="12" height="11" viewBox="0 0 12 11"><g fill="none" stroke="#fff" stroke-width="1.100"><path d="M1 10.500A9.500 9.500 0 0 1 10.500 1" opacity="0.9"/><path d="M4 10.500A6.500 6.500 0 0 1 10.500 4"/><path d="M7 10.500A3.500 3.500 0 0 1 10.500 7"/></g><rect x="9" y="9" width="2" height="2" fill="#fff"/></svg>
<svg style="left:906.5px;top:555px;" width="13" height="11" viewBox="0 0 13 11"><path d="M0.500 3.500H3L6 0.800V10.200L3 7.500H0.500Z" fill="none" stroke="#fff" stroke-width="1"/><path d="M8 3.500Q9.200 5.500 8 7.500M9.800 2Q12 5.500 9.800 9M11.500 0.800Q14.500 5.500 11.500 10.200" fill="none" stroke="#fff" stroke-width="0.900"/></svg>
<svg style="left:925px;top:555px;" width="13" height="12" viewBox="0 0 13 12"><path d="M0.500 0.500H12.500V9H8L6.500 11L5 9H0.500Z" fill="#fff"/><path d="M2.500 2.500H10.500M2.500 4.500H10.500M2.500 6.500H7.500" stroke="#07080d" stroke-width="1" opacity="0.800"/></svg>
<span class="t" style="left:949.5px;top:556.5px;font-size:8px;line-height:10px;height:10px;color:#fff;font-weight:normal;font-style:normal;letter-spacing:1.50px;direction:rtl;">فا</span>
<span class="t" style="left:978.4px;top:548.1px;font-size:9px;line-height:12px;height:12px;color:#fff;font-weight:normal;font-style:normal;letter-spacing:-0.29px;">6:11 PM</span>
<span class="t" style="left:973px;top:560.8px;font-size:9px;line-height:12px;height:12px;color:#fff;font-weight:normal;font-style:normal;letter-spacing:-0.12px;">11/17/2020</span>
<div class="a" style="left:1020px;top:545.5px;width:1px;height:30.5px;background:#555"></div>

</div>
</body></html>
